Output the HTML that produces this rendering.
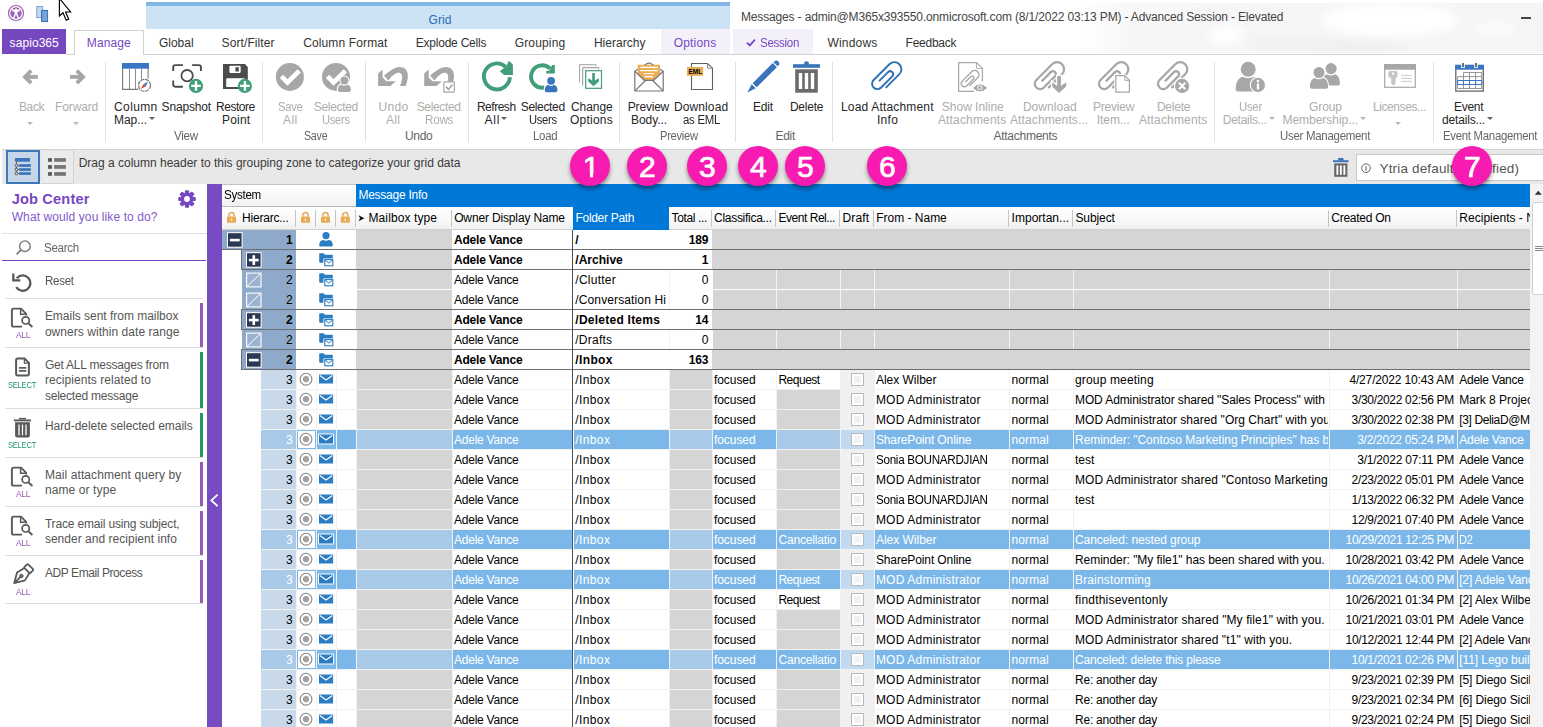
<!DOCTYPE html>
<html lang="en"><head><meta charset="utf-8"><title>Messages - sapio365</title><style>
html,body{margin:0;padding:0;}
body{width:1543px;height:727px;overflow:hidden;position:relative;background:#fff;font-family:"Liberation Sans",sans-serif;font-size:12px;}
div,svg{position:absolute;}
.t{white-space:pre;}
</style></head>
<body>
<div style="left:0px;top:0px;width:1543px;height:55px;background:#fff;"></div>
<svg style="left:1080px;top:0px;" width="463" height="54" viewBox="0 0 463 54"><defs><filter id="wb" x="-20%" y="-50%" width="140%" height="200%"><feGaussianBlur stdDeviation="5"/></filter><linearGradient id="wg" x1="0" x2="1"><stop offset="0" stop-color="#f6f6f6" stop-opacity="0"/><stop offset="0.12" stop-color="#f6f6f6"/><stop offset="1" stop-color="#f5f5f5"/></linearGradient></defs><rect x="0" y="3" width="463" height="50" fill="url(#wg)"/><g filter="url(#wb)"><ellipse cx="310" cy="20" rx="68" ry="17" fill="#fff"/><ellipse cx="147" cy="35" rx="18" ry="9" fill="#fff"/><ellipse cx="80" cy="14" rx="40" ry="6" fill="#fbfbfb"/><ellipse cx="270" cy="46" rx="60" ry="5" fill="#eeeeee"/><ellipse cx="200" cy="42" rx="40" ry="5" fill="#f0f0f0"/><ellipse cx="415" cy="30" rx="22" ry="10" fill="#fafafa"/></g></svg>
<div style="left:146px;top:2px;width:584px;height:27px;background:#cce3f6;"></div>
<div style="left:146px;top:2px;width:584px;height:4px;background:#82b7e5;"></div>
<div class="t" style="top:12px;height:16px;line-height:16px;color:#2a6bb3;letter-spacing:0.109px;left:428.5px;">Grid</div>
<div class="t" style="top:8.5px;height:16px;line-height:16px;color:#444;letter-spacing:-0.157px;left:741px;">Messages - admin@M365x393550.onmicrosoft.com (8/1/2022 03:13 PM) - Advanced Session - Elevated</div>
<div style="left:1521px;top:17px;width:9.5px;height:1.6px;background:#444;"></div>
<svg style="left:7px;top:4px;" width="18" height="18" viewBox="0 0 18 18"><circle cx="9" cy="9" r="7.5" fill="#fff" stroke="#9a5cb6" stroke-width="1.2"/><circle cx="9" cy="9" r="5.7" fill="#9f62b9"/><path d="M9 8.6 L4.6 5.2 M9 8.6 L13.4 5.2 M9 8.2 L6.6 14.6 M9 8.2 L11.4 14.6" stroke="#fff" stroke-width="1.5" fill="none"/><circle cx="9" cy="6.3" r="1.7" fill="#fff"/><path d="M9 11.6 L10.2 13.8 H7.8Z" fill="#9f62b9"/></svg>
<svg style="left:35px;top:5px;" width="15" height="18" viewBox="0 0 15 18"><rect x="1.7" y="1.6" width="6" height="11" fill="#c6d7eb" stroke="#79a5d8" stroke-width="1"/><rect x="6.6" y="5.5" width="6" height="11" fill="#79a4d6" stroke="#2f6eb6" stroke-width="1"/></svg>
<svg style="left:56px;top:0px;" width="18" height="24" viewBox="0 0 18 24"><path d="M3.4 -1.6 L3.4 16 L7 12.8 L10.2 20.3 L12.7 19.2 L9.6 12 L14.6 12 Z" fill="#fff" stroke="#000" stroke-width="1.15" stroke-linejoin="miter"/></svg>
<div style="left:66px;top:54px;width:1477px;height:1px;background:#d2d2d2;"></div>
<div style="left:2px;top:29px;width:64px;height:25.4px;background:#7648c0;"></div>
<div class="t" style="top:34.5px;height:16px;line-height:16px;color:#fff;letter-spacing:0.069px;left:9.6px;">sapio365</div>
<div style="left:74px;top:29.5px;width:70px;height:25.5px;background:#fff;border:1px solid #d2d2d2;border-bottom:none;box-sizing:border-box;"></div>
<div class="t" style="top:35px;height:16px;line-height:16px;color:#7648c0;letter-spacing:0.085px;left:86.8px;">Manage</div>
<div style="left:661px;top:29px;width:69px;height:25px;background:#f4f0fa;"></div>
<div style="left:733px;top:29px;width:80px;height:25px;background:#f4f0fa;"></div>
<div class="t" style="top:35px;height:16px;line-height:16px;color:#333;letter-spacing:0.002px;left:158.9px;">Global</div>
<div class="t" style="top:35px;height:16px;line-height:16px;color:#333;letter-spacing:0.088px;left:221.6px;">Sort/Filter</div>
<div class="t" style="top:35px;height:16px;line-height:16px;color:#333;letter-spacing:0.126px;left:303.2px;">Column Format</div>
<div class="t" style="top:35px;height:16px;line-height:16px;color:#333;letter-spacing:-0.215px;left:415.7px;">Explode Cells</div>
<div class="t" style="top:35px;height:16px;line-height:16px;color:#333;letter-spacing:0.161px;left:514.7px;">Grouping</div>
<div class="t" style="top:35px;height:16px;line-height:16px;color:#333;letter-spacing:0.018px;left:593.9px;">Hierarchy</div>
<div class="t" style="top:35px;height:16px;line-height:16px;color:#7648c0;letter-spacing:0.19px;left:673.7px;">Options</div>
<div class="t" style="top:35px;height:16px;line-height:16px;color:#7648c0;letter-spacing:-0.3px;left:759.7px;transform:scaleX(0.9633);transform-origin:left center;">Session</div>
<div class="t" style="top:35px;height:16px;line-height:16px;color:#333;letter-spacing:0.185px;left:827.5px;">Windows</div>
<div class="t" style="top:35px;height:16px;line-height:16px;color:#333;letter-spacing:-0.258px;left:905.6px;">Feedback</div>
<svg style="left:746px;top:38px;" width="10" height="9" viewBox="0 0 10 9"><path d="M1 4.6 L3.8 7.4 L9 1.6" fill="none" stroke="#7648c0" stroke-width="1.8"/></svg>
<div style="left:105px;top:62px;width:1px;height:80px;background:#e1e1e1;"></div>
<div style="left:262px;top:62px;width:1px;height:80px;background:#e1e1e1;"></div>
<div style="left:365px;top:62px;width:1px;height:80px;background:#e1e1e1;"></div>
<div style="left:468px;top:62px;width:1px;height:80px;background:#e1e1e1;"></div>
<div style="left:619px;top:62px;width:1px;height:80px;background:#e1e1e1;"></div>
<div style="left:735px;top:62px;width:1px;height:80px;background:#e1e1e1;"></div>
<div style="left:832px;top:62px;width:1px;height:80px;background:#e1e1e1;"></div>
<div style="left:1214px;top:62px;width:1px;height:80px;background:#e1e1e1;"></div>
<div style="left:1433px;top:62px;width:1px;height:80px;background:#e1e1e1;"></div>
<div class="t" style="top:98.5px;height:16px;line-height:16px;color:#adadad;letter-spacing:-0.329px;left:18.9px;">Back</div>
<div class="t" style="top:98.5px;height:16px;line-height:16px;color:#adadad;letter-spacing:-0.153px;left:55.1px;">Forward</div>
<div class="t" style="top:98.5px;height:16px;line-height:16px;color:#262626;letter-spacing:0.348px;left:114.1px;">Column</div>
<div class="t" style="top:111.5px;height:16px;line-height:16px;color:#262626;letter-spacing:-0.072px;left:114.1px;">Map...</div>
<div class="t" style="top:98.5px;height:16px;line-height:16px;color:#262626;letter-spacing:-0.174px;left:161.6px;">Snapshot</div>
<div class="t" style="top:98.5px;height:16px;line-height:16px;color:#262626;letter-spacing:-0.455px;left:216px;">Restore</div>
<div class="t" style="top:111.5px;height:16px;line-height:16px;color:#262626;letter-spacing:0.235px;left:221.9px;">Point</div>
<div class="t" style="top:128px;height:16px;line-height:16px;color:#666;letter-spacing:-0.3px;left:173.9px;transform:scaleX(0.968);transform-origin:left center;">View</div>
<div class="t" style="top:98.5px;height:16px;line-height:16px;color:#adadad;letter-spacing:-0.3px;left:277.7px;transform:scaleX(0.9411);transform-origin:left center;">Save</div>
<div class="t" style="top:111.5px;height:16px;line-height:16px;color:#adadad;letter-spacing:0.328px;left:283.1px;">All</div>
<div class="t" style="top:98.5px;height:16px;line-height:16px;color:#adadad;letter-spacing:-0.329px;left:313.8px;">Selected</div>
<div class="t" style="top:111.5px;height:16px;line-height:16px;color:#adadad;letter-spacing:-0.3px;left:322.2px;transform:scaleX(0.9322);transform-origin:left center;">Users</div>
<div class="t" style="top:128px;height:16px;line-height:16px;color:#666;letter-spacing:-0.3px;left:303.8px;transform:scaleX(0.8919);transform-origin:left center;">Save</div>
<div class="t" style="top:98.5px;height:16px;line-height:16px;color:#adadad;letter-spacing:0.337px;left:378.6px;">Undo</div>
<div class="t" style="top:111.5px;height:16px;line-height:16px;color:#adadad;letter-spacing:0.378px;left:385.9px;">All</div>
<div class="t" style="top:98.5px;height:16px;line-height:16px;color:#adadad;letter-spacing:-0.343px;left:416.7px;">Selected</div>
<div class="t" style="top:111.5px;height:16px;line-height:16px;color:#adadad;letter-spacing:-0.3px;left:425px;transform:scaleX(0.9754);transform-origin:left center;">Rows</div>
<div class="t" style="top:128px;height:16px;line-height:16px;color:#666;letter-spacing:-0.296px;left:404.9px;">Undo</div>
<div class="t" style="top:98.5px;height:16px;line-height:16px;color:#262626;letter-spacing:-0.472px;left:476.9px;">Refresh</div>
<div class="t" style="top:111.5px;height:16px;line-height:16px;color:#262626;letter-spacing:0.828px;left:484.5px;">All</div>
<div class="t" style="top:98.5px;height:16px;line-height:16px;color:#262626;letter-spacing:-0.343px;left:520.8px;">Selected</div>
<div class="t" style="top:111.5px;height:16px;line-height:16px;color:#262626;letter-spacing:-0.3px;left:529.1px;transform:scaleX(0.9322);transform-origin:left center;">Users</div>
<div class="t" style="top:98.5px;height:16px;line-height:16px;color:#262626;letter-spacing:-0.049px;left:570.9px;">Change</div>
<div class="t" style="top:111.5px;height:16px;line-height:16px;color:#262626;letter-spacing:0.223px;left:570px;">Options</div>
<div class="t" style="top:128px;height:16px;line-height:16px;color:#666;letter-spacing:-0.3px;left:533px;transform:scaleX(0.9534);transform-origin:left center;">Load</div>
<div class="t" style="top:98.5px;height:16px;line-height:16px;color:#262626;letter-spacing:-0.198px;left:627.8px;">Preview</div>
<div class="t" style="top:111.5px;height:16px;line-height:16px;color:#262626;letter-spacing:-0.061px;left:631px;">Body...</div>
<div class="t" style="top:98.5px;height:16px;line-height:16px;color:#262626;letter-spacing:0.104px;left:674px;">Download</div>
<div class="t" style="top:111.5px;height:16px;line-height:16px;color:#262626;letter-spacing:-0.3px;left:682.9px;transform:scaleX(0.9518);transform-origin:left center;">as EML</div>
<div class="t" style="top:128px;height:16px;line-height:16px;color:#666;letter-spacing:-0.3px;left:660.2px;transform:scaleX(0.9318);transform-origin:left center;">Preview</div>
<div class="t" style="top:98.5px;height:16px;line-height:16px;color:#262626;letter-spacing:-0.129px;left:752.9px;">Edit</div>
<div class="t" style="top:98.5px;height:16px;line-height:16px;color:#262626;letter-spacing:-0.217px;left:789.9px;">Delete</div>
<div class="t" style="top:128px;height:16px;line-height:16px;color:#666;letter-spacing:-0.296px;left:775.5px;">Edit</div>
<div class="t" style="top:98.5px;height:16px;line-height:16px;color:#262626;letter-spacing:0.173px;left:841px;">Load Attachment</div>
<div class="t" style="top:111.5px;height:16px;line-height:16px;color:#262626;letter-spacing:0.328px;left:876.9px;">Info</div>
<div class="t" style="top:98.5px;height:16px;line-height:16px;color:#adadad;letter-spacing:-0.005px;left:941.8px;">Show Inline</div>
<div class="t" style="top:111.5px;height:16px;line-height:16px;color:#adadad;letter-spacing:0.17px;left:937.9px;">Attachments</div>
<div class="t" style="top:98.5px;height:16px;line-height:16px;color:#adadad;letter-spacing:0.061px;left:1022.9px;">Download</div>
<div class="t" style="top:111.5px;height:16px;line-height:16px;color:#adadad;letter-spacing:0.115px;left:1010px;">Attachments...</div>
<div class="t" style="top:98.5px;height:16px;line-height:16px;color:#adadad;letter-spacing:-0.198px;left:1092.9px;">Preview</div>
<div class="t" style="top:111.5px;height:16px;line-height:16px;color:#adadad;letter-spacing:-0.057px;left:1096.8px;">Item...</div>
<div class="t" style="top:98.5px;height:16px;line-height:16px;color:#adadad;letter-spacing:-0.218px;left:1156.9px;">Delete</div>
<div class="t" style="top:111.5px;height:16px;line-height:16px;color:#adadad;letter-spacing:0.17px;left:1138.9px;">Attachments</div>
<div class="t" style="top:128px;height:16px;line-height:16px;color:#666;letter-spacing:-0.27px;left:993.5px;">Attachments</div>
<div class="t" style="top:98.5px;height:16px;line-height:16px;color:#adadad;letter-spacing:-0.3px;left:1239.2px;transform:scaleX(0.9491);transform-origin:left center;">User</div>
<div class="t" style="top:111.5px;height:16px;line-height:16px;color:#adadad;letter-spacing:-0.265px;left:1222.8px;">Details...</div>
<div class="t" style="top:98.5px;height:16px;line-height:16px;color:#adadad;letter-spacing:-0.09px;left:1309px;">Group</div>
<div class="t" style="top:111.5px;height:16px;line-height:16px;color:#adadad;letter-spacing:-0.036px;left:1282.5px;">Membership...</div>
<div class="t" style="top:98.5px;height:16px;line-height:16px;color:#adadad;letter-spacing:-0.417px;left:1373px;">Licenses...</div>
<div class="t" style="top:128px;height:16px;line-height:16px;color:#666;letter-spacing:-0.3px;left:1279.9px;transform:scaleX(0.9564);transform-origin:left center;">User Management</div>
<div class="t" style="top:98.5px;height:16px;line-height:16px;color:#262626;letter-spacing:-0.297px;left:1454px;">Event</div>
<div class="t" style="top:111.5px;height:16px;line-height:16px;color:#262626;letter-spacing:-0.178px;left:1442.1px;">details...</div>
<div class="t" style="top:128px;height:16px;line-height:16px;color:#666;letter-spacing:-0.3px;left:1443.1px;transform:scaleX(0.9492);transform-origin:left center;">Event Management</div>
<svg style="left:26.5px;top:122.0px;" width="6" height="3" viewBox="0 0 6 3"><path d="M0 0 L6 0 L3 3Z" fill="#b8b8b8"/></svg>
<svg style="left:73px;top:122.0px;" width="6" height="3" viewBox="0 0 6 3"><path d="M0 0 L6 0 L3 3Z" fill="#b8b8b8"/></svg>
<svg style="left:148.6px;top:116.9px;" width="6" height="3" viewBox="0 0 6 3"><path d="M0 0 L6 0 L3 3Z" fill="#606060"/></svg>
<svg style="left:500.8px;top:116.9px;" width="6" height="3" viewBox="0 0 6 3"><path d="M0 0 L6 0 L3 3Z" fill="#606060"/></svg>
<svg style="left:1268.7px;top:116.9px;" width="6" height="3" viewBox="0 0 6 3"><path d="M0 0 L6 0 L3 3Z" fill="#b8b8b8"/></svg>
<svg style="left:1359.5px;top:116.9px;" width="6" height="3" viewBox="0 0 6 3"><path d="M0 0 L6 0 L3 3Z" fill="#b8b8b8"/></svg>
<svg style="left:1395.4px;top:122.0px;" width="6" height="3" viewBox="0 0 6 3"><path d="M0 0 L6 0 L3 3Z" fill="#b8b8b8"/></svg>
<svg style="left:1486.7px;top:116.9px;" width="6" height="3" viewBox="0 0 6 3"><path d="M0 0 L6 0 L3 3Z" fill="#606060"/></svg>
<svg style="left:0;top:0" width="1543" height="150" viewBox="0 0 1543 150"><path d="M37.9 76.9 H25.6" fill="none" stroke="#a7a7a7" stroke-width="3.9"/><path d="M31.2 70.7 L25 76.9 L31.2 83.1" fill="none" stroke="#a7a7a7" stroke-width="3.9"/><path d="M70 76.9 H82.4" fill="none" stroke="#a7a7a7" stroke-width="3.9"/><path d="M76.8 70.7 L83 76.9 L76.8 83.1" fill="none" stroke="#a7a7a7" stroke-width="3.9"/><path d="M148.1 68 V78.6 M122.6 68 V89.4 H138.4" fill="none" stroke="#777" stroke-width="1.1"/><rect x="122" y="63" width="27" height="5.7" fill="#3a76c3"/><path d="M129.5 69 V89 M135.5 69 V89 M141.5 69 V79.5" stroke="#8c8c8c" stroke-width="1"/><circle cx="144.5" cy="85.3" r="6" fill="#fff" stroke="#777" stroke-width="1.2" stroke-dasharray="3.9 0.8"/><path d="M148.2 81.6 L145.6 86.4 L143.4 84.2Z" fill="#3a76c3"/><path d="M140.8 89 L145.6 86.4 L143.4 84.2Z" fill="#e0452f"/><path d="M173.2 71 V67.2 Q173.2 65.1 175.3 65.1 H182.9 M192.1 65.1 H198.8 Q200.9 65.1 200.9 67.2 V71 M173.2 80.5 V84.6 Q173.2 86.7 175.3 86.7 H182.9" fill="none" stroke="#4c4c4c" stroke-width="1.9"/><circle cx="187.1" cy="75.7" r="5.7" fill="#fff" stroke="#4c4c4c" stroke-width="1.8"/><circle cx="196" cy="85.9" r="7.1" fill="#419e79"/><path d="M191.2 85.9 H200.8 M196 81.10000000000001 V90.7" stroke="#fff" stroke-width="2.4"/><path d="M223 64 H245.1 L247.8 67.2 V89 H223Z" fill="#4c4c4c"/><rect x="229.4" y="65.7" width="11.3" height="7.3" rx="1.2" fill="#fff"/><rect x="235.4" y="67.2" width="3.4" height="4.3" fill="#4c4c4c"/><rect x="226.2" y="78.3" width="18.9" height="8.8" rx="1.2" fill="#fff"/><circle cx="244.9" cy="85.9" r="7.1" fill="#419e79"/><path d="M240.1 85.9 H249.70000000000002 M244.9 81.10000000000001 V90.7" stroke="#fff" stroke-width="2.4"/><circle cx="289.9" cy="76.9" r="14" fill="#a7a7a7"/><path d="M281.4 76.4 L287.5 82.4 L299.2 70.9" fill="none" stroke="#fff" stroke-width="4.7"/><circle cx="336" cy="76.9" r="14" fill="#a7a7a7"/><path d="M327.5 76.4 L333.6 82.4 L345.3 70.9" fill="none" stroke="#fff" stroke-width="4.7"/><circle cx="344.4" cy="80.5" r="5.0" fill="#fff"/><path d="M337.9 90.0 C337.9 86.8 339.46 84.96 341.358 84.4 C343.22999999999996 86.2 345.57 86.2 347.44199999999995 84.4 C349.34 84.96 350.9 86.8 350.9 90.0 C350.9 91.4 349.7 92.0 348.29999999999995 92.0 L340.5 92.0 C339.09999999999997 92.0 337.9 91.4 337.9 90.0Z" fill="#fff" stroke="#fff" stroke-width="2.2"/><circle cx="344.4" cy="80.5" r="3.9" fill="#a7a7a7"/><path d="M337.9 90.0 C337.9 86.8 339.46 84.96 341.358 84.4 C343.22999999999996 86.2 345.57 86.2 347.44199999999995 84.4 C349.34 84.96 350.9 86.8 350.9 90.0 C350.9 91.4 349.7 92.0 348.29999999999995 92.0 L340.5 92.0 C339.09999999999997 92.0 337.9 91.4 337.9 90.0Z" fill="#a7a7a7"/><g transform="translate(0,0)" fill="#a7a7a7"><path d="M 384 75.8 C 390 69.8, 396 66.9, 399.6 66.9 C 405.2 66.9, 408.1 71, 407.9 76 C 407.7 80, 406.8 83, 405.7 85.9 L 400 85.9 C 401.4 82.5, 402.2 79.5, 402.2 77 C 402.2 74.4, 401 72.7, 398.8 72.7 C 396 72.7, 392 75.2, 388.4 80.4 Z"/><path d="M382.6 69.4 L378.1 73.5 L378.1 85.9 L390.4 85.9 L395.8 81.2 L386.5 81.2 L382.6 77.5Z"/></g><g transform="translate(46.1,0)" fill="#a7a7a7"><path d="M 384 75.8 C 390 69.8, 396 66.9, 399.6 66.9 C 405.2 66.9, 408.1 71, 407.9 76 C 407.7 80, 406.8 83, 405.7 85.9 L 400 85.9 C 401.4 82.5, 402.2 79.5, 402.2 77 C 402.2 74.4, 401 72.7, 398.8 72.7 C 396 72.7, 392 75.2, 388.4 80.4 Z"/><path d="M382.6 69.4 L378.1 73.5 L378.1 85.9 L390.4 85.9 L395.8 81.2 L386.5 81.2 L382.6 77.5Z"/></g><rect x="443.8" y="81.8" width="10.6" height="10.4" rx="0.8" fill="#fff" stroke="#a7a7a7" stroke-width="1.2"/><path d="M446 86.6 L448.4 89.4 L452.6 84.4" fill="none" stroke="#a7a7a7" stroke-width="1.6"/><path d="M509.9 77.2 A13 13 0 1 1 505.6 66.7" fill="none" stroke="#419e79" stroke-width="3.9"/><path d="M509 60.8 L512.9 64.7 V74.9 H504.1 L499.8 71.3 L506 66.5Z" fill="#419e79"/><path d="M544.2 87.5 A11.2 11.2 0 1 1 550.2 68.6" fill="none" stroke="#419e79" stroke-width="3.9"/><path d="M552.1 65 H554.8 V73.5 H546.2 V71 L549.6 70.6Z" fill="#419e79"/><circle cx="551.1" cy="80.8" r="5.0" fill="#fff"/><path d="M544.75 90.3 C544.75 87.1 546.274 85.25999999999999 548.058 84.7 C549.9300000000001 86.5 552.27 86.5 554.142 84.7 C555.926 85.25999999999999 557.45 87.1 557.45 90.3 C557.45 91.7 556.25 92.3 554.85 92.3 L547.35 92.3 C545.95 92.3 544.75 91.7 544.75 90.3Z" fill="#fff" stroke="#fff" stroke-width="2.2"/><circle cx="551.1" cy="80.8" r="3.9" fill="#3a74ba"/><path d="M544.75 90.3 C544.75 87.1 546.274 85.25999999999999 548.058 84.7 C549.9300000000001 86.5 552.27 86.5 554.142 84.7 C555.926 85.25999999999999 557.45 87.1 557.45 90.3 C557.45 91.7 556.25 92.3 554.85 92.3 L547.35 92.3 C545.95 92.3 544.75 91.7 544.75 90.3Z" fill="#3a74ba"/><path d="M579.6 82.7 V64.7 H595.8 V66.4" fill="none" stroke="#a0a0a0" stroke-width="1"/><path d="M582.7 85.6 V67.7 H598.7 V69.4" fill="none" stroke="#909090" stroke-width="1"/><rect x="585.7" y="70.7" width="15.8" height="17.6" fill="#fff" stroke="#419e79" stroke-width="1.2"/><path d="M592.2 73 H594.9 V80.6 L598.9 78.2 V81.4 L593.55 86.2 L588.2 81.4 V78.2 L592.2 80.6Z" fill="#419e79"/><path d="M634.8 71.3 L646 64.2 Q649 62.2 652 64.2 L663.2 71.3 V91 H634.8Z" fill="#fff" stroke="#757575" stroke-width="1.2"/><path d="M637.9 64.7 H660 V73.2 L653.4 80.2 H644.6 L637.9 73.2Z" fill="#e8ae57"/><path d="M640.2 67.4 H657.8 M640.2 70.6 H657.8 M643.5 73.7 H654 M644.6 76.6 H653" stroke="#fff" stroke-width="1.1"/><path d="M634.8 71.3 L644.5 80.3 H653.6 L663.2 71.3 M635.2 90.6 L645.4 80.5 M662.8 90.6 L652.8 80.5" fill="none" stroke="#757575" stroke-width="1.2"/><path d="M691.5 63.5 H707.5 L712.5 68.2 V89.5 H691.5Z" fill="#fff" stroke="#606060" stroke-width="1.1"/><path d="M707.5 63.5 V68.2 H712.5" fill="none" stroke="#808080" stroke-width="0.9"/><rect x="687" y="67" width="16.2" height="8.8" fill="#e8ae57"/><g transform="translate(762.6,77.3) rotate(45)" fill="#3a74ba"><rect x="-2.9" y="-17.2" width="5.8" height="28.4"/><path d="M-2.9 -18.4 V-19.4 A2.9 2.9 0 0 1 2.9 -19.4 V-18.4Z"/><path d="M-2.9 12.6 H2.9 L0 21.6Z"/></g><rect x="793" y="64.2" width="27" height="3.6" fill="#3a74ba"/><path d="M804 65 V63.4 Q804 61.2 806.5 61.2 Q809 61.2 809 63.4 V65Z" fill="#3a74ba"/><rect x="795.2" y="69.3" width="22.6" height="23.4" fill="#6b6b6b"/><rect x="798.8" y="73" width="3.4" height="16" fill="#fff"/><rect x="804.8" y="73" width="3.4" height="16" fill="#fff"/><rect x="810.8" y="73" width="3.4" height="16" fill="#fff"/><g transform="translate(879.2,74.4) rotate(45) scale(1.0)"><path d="M 14.1 4.2 L 14.1 -14.4 A 7.05 7.05 0 0 0 0 -14.4 L 0 7.9 A 5.325 5.325 0 0 0 10.65 7.9 L 10.65 -7.84 A 2.975 2.975 0 0 0 4.7 -7.84 L 4.7 4.2" fill="none" stroke="#2f6fb8" stroke-width="1.9" stroke-linecap="round"/></g><path d="M958.6 62.6 H976.5 L982.4 68.4 V81.5 M958.6 62.6 V91.4 H974" fill="none" stroke="#a6a6a6" stroke-width="1.2"/><path d="M976.5 62.6 V68.4 H982.4" fill="none" stroke="#b0b0b0"/><g transform="translate(965.6,77.8) rotate(45) scale(0.6)"><path d="M 14.1 4.2 L 14.1 -14.4 A 7.05 7.05 0 0 0 0 -14.4 L 0 7.9 A 5.325 5.325 0 0 0 10.65 7.9 L 10.65 -7.84 A 2.975 2.975 0 0 0 4.7 -7.84 L 4.7 4.2" fill="none" stroke="#a6a6a6" stroke-width="2.2" stroke-linecap="round"/></g><path d="M972.6 88 Q979.8 79.6 987.6 88 Q979.8 96 972.6 88Z" fill="#a6a6a6" stroke="#fff" stroke-width="1"/><ellipse cx="979.8" cy="87.6" rx="3" ry="2.6" fill="#d9d9d9"/><circle cx="979.8" cy="87.6" r="1.2" fill="#a6a6a6"/><g transform="translate(1041.9,74.4) rotate(45) scale(1.0)"><path d="M 14.1 4.2 L 14.1 -14.4 A 7.05 7.05 0 0 0 0 -14.4 L 0 7.9 A 5.325 5.325 0 0 0 10.65 7.9 L 10.65 -7.84 A 2.975 2.975 0 0 0 4.7 -7.84 L 4.7 4.2" fill="none" stroke="#a7a7a7" stroke-width="2.3" stroke-linecap="round"/></g><path d="M1052.2 82.2 L1057.2 86 V75.9 H1060.9 V86 L1066.2 82.2 V86.5 L1059 92.9 L1052.2 86.5Z" fill="#fff" stroke="#fff" stroke-width="2.6"/><path d="M1052.2 82.2 L1057.2 86 V75.9 H1060.9 V86 L1066.2 82.2 V86.5 L1059 92.9 L1052.2 86.5Z" fill="#a7a7a7"/><g transform="translate(1106.1,74.4) rotate(45) scale(1.0)"><path d="M 14.1 4.2 L 14.1 -14.4 A 7.05 7.05 0 0 0 0 -14.4 L 0 7.9 A 5.325 5.325 0 0 0 10.65 7.9 L 10.65 -7.84 A 2.975 2.975 0 0 0 4.7 -7.84 L 4.7 4.2" fill="none" stroke="#a7a7a7" stroke-width="2.3" stroke-linecap="round"/></g><path d="M1115.8 75.7 H1124.8 L1129.4 80.3 V92.2 H1115.8Z" fill="#fff" stroke="#fff" stroke-width="3.2"/><path d="M1115.8 75.7 H1124.8 L1129.4 80.3 V92.2 H1115.8Z" fill="#fff" stroke="#a7a7a7" stroke-width="1.2"/><path d="M1124.8 75.7 V80.3 H1129.4" fill="none" stroke="#a7a7a7"/><g transform="translate(1165.1,74.4) rotate(45) scale(1.0)"><path d="M 14.1 4.2 L 14.1 -14.4 A 7.05 7.05 0 0 0 0 -14.4 L 0 7.9 A 5.325 5.325 0 0 0 10.65 7.9 L 10.65 -7.84 A 2.975 2.975 0 0 0 4.7 -7.84 L 4.7 4.2" fill="none" stroke="#a7a7a7" stroke-width="2.3" stroke-linecap="round"/></g><circle cx="1182.1" cy="85.9" r="8.3" fill="#fff"/><circle cx="1182.1" cy="85.9" r="7.1" fill="#a7a7a7"/><path d="M1178.8 82.6 L1185.4 89.2 M1185.4 82.6 L1178.8 89.2" stroke="#fff" stroke-width="2"/><circle cx="1248.2" cy="69.3" r="7.5" fill="#a7a7a7"/><path d="M1235.7 89.39999999999999 C1235.7 81.64999999999999 1238.7 78.19999999999999 1242.3500000000001 76.8 C1245.95 78.6 1250.45 78.6 1254.05 76.8 C1257.7 78.19999999999999 1260.7 81.64999999999999 1260.7 89.39999999999999 C1260.7 90.8 1259.5 91.39999999999999 1258.1000000000001 91.39999999999999 L1238.3 91.39999999999999 C1236.9 91.39999999999999 1235.7 90.8 1235.7 89.39999999999999Z" fill="#a7a7a7"/><circle cx="1257.9" cy="84.9" r="8.2" fill="#fff"/><circle cx="1257.9" cy="84.9" r="7.1" fill="#a7a7a7"/><rect x="1256.8" y="83.4" width="2.3" height="6" fill="#fff"/><rect x="1256.8" y="79.9" width="2.3" height="2.3" fill="#fff"/><circle cx="1331.1" cy="68.6" r="5.6" fill="#a7a7a7"/><path d="M1322.3 83.39999999999998 C1322.3 77.85999999999999 1324.412 75.19199999999998 1326.732 74.19999999999999 C1329.4199999999998 75.99999999999999 1332.78 75.99999999999999 1335.4679999999998 74.19999999999999 C1337.7879999999998 75.19199999999998 1339.8999999999999 77.85999999999999 1339.8999999999999 83.39999999999998 C1339.8999999999999 84.79999999999998 1338.6999999999998 85.39999999999998 1337.3 85.39999999999998 L1324.8999999999999 85.39999999999998 C1323.5 85.39999999999998 1322.3 84.79999999999998 1322.3 83.39999999999998Z" fill="#a7a7a7"/><circle cx="1319" cy="72.5" r="6.6" fill="#fff"/><path d="M1309.9 86.8 C1309.9 81.52 1312.084 78.94399999999999 1314.71 78.0 C1317.35 79.8 1320.65 79.8 1323.29 78.0 C1325.916 78.94399999999999 1328.1 81.52 1328.1 86.8 C1328.1 88.2 1326.8999999999999 88.8 1325.5 88.8 L1312.5 88.8 C1311.1000000000001 88.8 1309.9 88.2 1309.9 86.8Z" fill="#fff" stroke="#fff" stroke-width="2.2"/><circle cx="1319" cy="72.5" r="5.5" fill="#a7a7a7"/><path d="M1309.9 86.8 C1309.9 81.52 1312.084 78.94399999999999 1314.71 78.0 C1317.35 79.8 1320.65 79.8 1323.29 78.0 C1325.916 78.94399999999999 1328.1 81.52 1328.1 86.8 C1328.1 88.2 1326.8999999999999 88.8 1325.5 88.8 L1312.5 88.8 C1311.1000000000001 88.8 1309.9 88.2 1309.9 86.8Z" fill="#a7a7a7"/><rect x="1384.7" y="64.6" width="30.6" height="22.7" fill="#fff" stroke="#a7a7a7" stroke-width="1.2"/><rect x="1384.1" y="64" width="31.8" height="5.7" fill="#a7a7a7"/><path d="M1388.2 73 Q1388.2 71 1390.2 71 H1395.6 Q1397.6 71 1397.6 73 V75.4 Q1397.6 77.6 1395.6 77.8 V83.4 L1393.4 85.8 L1391.2 83.4 V77.8 Q1388.2 77.6 1388.2 75.4Z" fill="#c6c6c6"/><rect x="1392" y="72.6" width="2" height="2" fill="#fff"/><path d="M1401.1 75.4 H1411.8 M1401.1 78.4 H1411.8 M1401.1 81.4 H1411.8" stroke="#c4c4c4" stroke-width="0.9"/><rect x="1455.8" y="66" width="27.5" height="25.1" fill="#fff" stroke="#686868" stroke-width="1.3"/><rect x="1455.2" y="64.7" width="28.7" height="5" fill="#3a76c3"/><rect x="1461.2" y="62.4" width="3.6" height="5.6" fill="#fff"/><rect x="1474.2" y="62.4" width="3.6" height="5.6" fill="#fff"/><rect x="1462.1" y="63" width="1.9" height="4.2" fill="#666"/><rect x="1475.1" y="63" width="1.9" height="4.2" fill="#666"/><path d="M1463.5 72.5 H1481.7 V88.5 H1457.6 V76.6 H1481.7 M1457.6 84.5 H1481.7 M1463.5 72.5 V88.5 M1469.5 72.5 V88.5 M1475.6 72.5 V88.5" fill="none" stroke="#8a8a8a" stroke-width="0.9" stroke-linejoin="round"/><path d="M1457.6 80.5 H1481.7 V84.5 H1457.6Z M1463.5 80.5 V84.5 M1469.5 80.5 V84.5 M1475.6 80.5 V84.5" fill="none" stroke="#3a76c3" stroke-width="1"/></svg>
<div class="t" style="top:64px;height:16px;line-height:16px;font-size:6.6px;font-weight:700;letter-spacing:-0.061px;left:688.4px;">EML</div>
<div style="left:2px;top:149px;width:1541px;height:35px;background:#e8e8e8;"></div>
<div style="left:2px;top:149px;width:1541px;height:1px;background:#d3d3d3;"></div>
<div style="left:6px;top:150px;width:34px;height:33.5px;background:#c6d6e8;border:2px solid #3d77b8;box-sizing:border-box;"></div>
<div style="left:41px;top:150px;width:33px;height:33.5px;background:#ebebeb;border:1px solid #d2d2d2;border-left-color:#e4e4e4;border-top-color:#e2e2e2;box-sizing:border-box;"></div>
<svg style="left:0;top:0" width="1543" height="190" viewBox="0 0 1543 190"><rect x="15" y="158" width="15" height="3.7" fill="#3b74b8"/><path d="M16.4 161.5 V174" stroke="#4a4a4a" stroke-width="0.9"/><rect x="19.2" y="164.2" width="11.6" height="2.7" fill="#3b74b8"/><path d="M17.6 165.54999999999998 H19.4" stroke="#4a4a4a" stroke-width="0.9"/><circle cx="16.4" cy="165.54999999999998" r="1.35" fill="#dfe8f2" stroke="#4a4a4a" stroke-width="0.9"/><rect x="19.2" y="168.2" width="11.6" height="2.7" fill="#3b74b8"/><path d="M17.6 169.54999999999998 H19.4" stroke="#4a4a4a" stroke-width="0.9"/><circle cx="16.4" cy="169.54999999999998" r="1.35" fill="#dfe8f2" stroke="#4a4a4a" stroke-width="0.9"/><rect x="19.2" y="172.2" width="11.6" height="2.7" fill="#3b74b8"/><path d="M17.6 173.54999999999998 H19.4" stroke="#4a4a4a" stroke-width="0.9"/><circle cx="16.4" cy="173.54999999999998" r="1.35" fill="#dfe8f2" stroke="#4a4a4a" stroke-width="0.9"/><rect x="48.1" y="158.1" width="3.8" height="3.7" fill="#555"/><rect x="54.1" y="158.1" width="11.8" height="3.7" fill="#767676"/><rect x="48.1" y="165.1" width="3.8" height="3.7" fill="#555"/><rect x="54.1" y="165.1" width="11.8" height="3.7" fill="#767676"/><rect x="48.1" y="172.1" width="3.8" height="3.7" fill="#555"/><rect x="54.1" y="172.1" width="11.8" height="3.7" fill="#767676"/><rect x="1333" y="160.2" width="15.6" height="2" fill="#3b74b8"/><rect x="1338" y="158" width="5.6" height="2.6" rx="0.8" fill="#3b74b8"/><rect x="1334.2" y="163.4" width="13.2" height="13.4" fill="#666"/><rect x="1336.4" y="165.4" width="1.9" height="9.4" fill="#fff"/><rect x="1339.9" y="165.4" width="1.9" height="9.4" fill="#fff"/><rect x="1343.4" y="165.4" width="1.9" height="9.4" fill="#fff"/></svg>
<div class="t" style="top:155px;height:16px;line-height:16px;color:#3a3a3a;letter-spacing:-0.006px;left:78.7px;">Drag a column header to this grouping zone to categorize your grid data</div>
<div style="left:1356px;top:154px;width:190px;height:27px;background:#fff;border:1px solid #c8c8c8;box-sizing:border-box;"></div>
<svg style="left:1360px;top:162px;" width="12" height="12" viewBox="0 0 12 12"><circle cx="6" cy="6.2" r="4.3" fill="none" stroke="#555" stroke-width="0.9"/><path d="M6 4 V8.6" stroke="#555" stroke-width="1"/></svg>
<div class="t" style="top:159px;height:19px;line-height:19px;font-size:13.5px;color:#555;letter-spacing:0.16px;left:1379.5px;">Ytria default (modified)</div>
<div style="left:0px;top:184px;width:207px;height:543px;background:#fff;"></div>
<div class="t" style="top:188.5px;height:20px;line-height:20px;font-size:14.6px;color:#7648c0;font-weight:700;letter-spacing:0.163px;left:11.7px;">Job Center</div>
<div class="t" style="top:208.5px;height:16px;line-height:16px;color:#8259c8;letter-spacing:0.095px;left:11.7px;">What would you like to do?</div>
<div style="left:2px;top:233px;width:205px;height:1px;background:#e0e0e0;"></div>
<div class="t" style="top:239.5px;height:16px;line-height:16px;color:#666;letter-spacing:-0.3px;left:44.4px;transform:scaleX(0.9663);transform-origin:left center;">Search</div>
<div style="left:2px;top:260px;width:204px;height:1.4px;background:#7648c0;"></div>
<div style="left:5px;top:298px;width:198px;height:1px;background:#dedede;"></div>
<div style="left:5px;top:347px;width:198px;height:1px;background:#dedede;"></div>
<div style="left:5px;top:408px;width:198px;height:1px;background:#dedede;"></div>
<div style="left:5px;top:457px;width:198px;height:1px;background:#dedede;"></div>
<div style="left:5px;top:506px;width:198px;height:1px;background:#dedede;"></div>
<div style="left:5px;top:555px;width:198px;height:1px;background:#dedede;"></div>
<div style="left:5px;top:603px;width:198px;height:1px;background:#dedede;"></div>
<div class="t" style="top:272.5px;height:16px;line-height:16px;color:#555;letter-spacing:-0.3px;left:45px;transform:scaleX(0.9616);transform-origin:left center;">Reset</div>
<div style="left:200px;top:303px;width:3px;height:44px;background:#9a58b2;"></div>
<div class="t" style="top:308px;height:16px;line-height:16px;color:#555;letter-spacing:-0.024px;left:44.9px;">Emails sent from mailbox</div>
<div class="t" style="top:323.5px;height:16px;line-height:16px;color:#555;letter-spacing:0.047px;left:44.9px;">owners within date range</div>
<div style="left:200px;top:352px;width:3px;height:56px;background:#22986a;"></div>
<div class="t" style="top:356.5px;height:16px;line-height:16px;color:#555;letter-spacing:-0.209px;left:44.9px;">Get ALL messages from</div>
<div class="t" style="top:372px;height:16px;line-height:16px;color:#555;letter-spacing:0.063px;left:44.9px;">recipients related to</div>
<div class="t" style="top:387.5px;height:16px;line-height:16px;color:#555;letter-spacing:-0.209px;left:44.9px;">selected message</div>
<div style="left:200px;top:413px;width:3px;height:44px;background:#22986a;"></div>
<div class="t" style="top:417.5px;height:16px;line-height:16px;color:#555;letter-spacing:-0.037px;left:44.9px;">Hard-delete selected emails</div>
<div style="left:200px;top:462px;width:3px;height:44px;background:#9a58b2;"></div>
<div class="t" style="top:466.5px;height:16px;line-height:16px;color:#555;letter-spacing:0.097px;left:44.9px;">Mail attachment query by</div>
<div class="t" style="top:482px;height:16px;line-height:16px;color:#555;letter-spacing:0.105px;left:44.9px;">name or type</div>
<div style="left:200px;top:511px;width:3px;height:44px;background:#9a58b2;"></div>
<div class="t" style="top:515.5px;height:16px;line-height:16px;color:#555;letter-spacing:-0.166px;left:44.9px;">Trace email using subject,</div>
<div class="t" style="top:530.5px;height:16px;line-height:16px;color:#555;letter-spacing:0.024px;left:44.9px;">sender and recipient info</div>
<div style="left:200px;top:560px;width:3px;height:43px;background:#9a58b2;"></div>
<div class="t" style="top:564.5px;height:16px;line-height:16px;color:#555;letter-spacing:-0.412px;left:44.9px;">ADP Email Process</div>
<div class="t" style="top:327px;height:16px;line-height:16px;font-size:9.6px;color:#9a58b2;letter-spacing:-0.3px;left:2.55px;width:40px;text-align:center;transform:scaleX(0.8739);transform-origin:center center;">ALL</div>
<div class="t" style="top:376.5px;height:16px;line-height:16px;font-size:9.6px;color:#22986a;letter-spacing:-0.3px;left:-7.55px;width:60px;text-align:center;transform:scaleX(0.7899);transform-origin:center center;">SELECT</div>
<div class="t" style="top:437px;height:16px;line-height:16px;font-size:9.6px;color:#22986a;letter-spacing:-0.3px;left:-7.55px;width:60px;text-align:center;transform:scaleX(0.7899);transform-origin:center center;">SELECT</div>
<div class="t" style="top:486px;height:16px;line-height:16px;font-size:9.6px;color:#9a58b2;letter-spacing:-0.3px;left:2.55px;width:40px;text-align:center;transform:scaleX(0.8739);transform-origin:center center;">ALL</div>
<div class="t" style="top:535px;height:16px;line-height:16px;font-size:9.6px;color:#9a58b2;letter-spacing:-0.3px;left:2.55px;width:40px;text-align:center;transform:scaleX(0.8739);transform-origin:center center;">ALL</div>
<div class="t" style="top:584px;height:16px;line-height:16px;font-size:9.6px;color:#9a58b2;letter-spacing:-0.3px;left:2.55px;width:40px;text-align:center;transform:scaleX(0.8739);transform-origin:center center;">ALL</div>
<svg style="left:0;top:0;z-index:3" width="230" height="727" viewBox="0 0 230 727"><g transform="translate(187,199)" fill="#7648c0"><rect x="-2.1" y="-8.8" width="4.2" height="5" rx="1" transform="rotate(0)"/><rect x="-2.1" y="-8.8" width="4.2" height="5" rx="1" transform="rotate(45)"/><rect x="-2.1" y="-8.8" width="4.2" height="5" rx="1" transform="rotate(90)"/><rect x="-2.1" y="-8.8" width="4.2" height="5" rx="1" transform="rotate(135)"/><rect x="-2.1" y="-8.8" width="4.2" height="5" rx="1" transform="rotate(180)"/><rect x="-2.1" y="-8.8" width="4.2" height="5" rx="1" transform="rotate(225)"/><rect x="-2.1" y="-8.8" width="4.2" height="5" rx="1" transform="rotate(270)"/><rect x="-2.1" y="-8.8" width="4.2" height="5" rx="1" transform="rotate(315)"/><circle r="6.5"/><circle r="2.9" fill="#fff"/></g><circle cx="24.9" cy="246.2" r="5.3" fill="none" stroke="#787878" stroke-width="1.4"/><path d="M20.8 250 L16.7 254.3" stroke="#787878" stroke-width="1.7"/><path d="M16.72 278.25 A7.7 7.7 0 1 1 16.17 287.18" fill="none" stroke="#595959" stroke-width="2.3"/><path d="M13.3 273.4 V280.3 H20.4" fill="none" stroke="#595959" stroke-width="2.3"/><path d="M22 326.6 H13.6 Q11.9 326.6 11.9 324.9 V310.3 Q11.9 308.6 13.6 308.6 H21 L26.2 313.8 V315.6" fill="none" stroke="#595959" stroke-width="1.9"/><path d="M20.6 309 V314.2 H25.8" fill="none" stroke="#595959" stroke-width="1.5"/><circle cx="25.7" cy="320.4" r="3.6" fill="#fff" stroke="#595959" stroke-width="1.7"/><path d="M28.4 323.2 L32.4 327" stroke="#595959" stroke-width="1.9"/><path d="M22 485.6 H13.6 Q11.9 485.6 11.9 483.9 V469.3 Q11.9 467.6 13.6 467.6 H21 L26.2 472.8 V474.6" fill="none" stroke="#595959" stroke-width="1.9"/><path d="M20.6 468 V473.2 H25.8" fill="none" stroke="#595959" stroke-width="1.5"/><circle cx="25.7" cy="479.4" r="3.6" fill="#fff" stroke="#595959" stroke-width="1.7"/><path d="M28.4 482.2 L32.4 486" stroke="#595959" stroke-width="1.9"/><path d="M22 534.6 H13.6 Q11.9 534.6 11.9 532.9 V518.3 Q11.9 516.6 13.6 516.6 H21 L26.2 521.8 V523.6" fill="none" stroke="#595959" stroke-width="1.9"/><path d="M20.6 517 V522.2 H25.8" fill="none" stroke="#595959" stroke-width="1.5"/><circle cx="25.7" cy="528.4" r="3.6" fill="#fff" stroke="#595959" stroke-width="1.7"/><path d="M28.4 531.2 L32.4 535" stroke="#595959" stroke-width="1.9"/><path d="M17.6 358.6 H24.6 L28.9 362.9 V373.8 Q28.9 375.4 27.3 375.4 H17.6 Q16.1 375.4 16.1 373.8 V360.2 Q16.1 358.6 17.6 358.6Z" fill="none" stroke="#595959" stroke-width="2"/><path d="M24.4 359 V363.2 H28.6" fill="none" stroke="#595959" stroke-width="1.3"/><path d="M19 367.8 H26.3 M19 370.9 H26.3" stroke="#595959" stroke-width="1.8"/><path d="M13.9 420.4 H31" stroke="#595959" stroke-width="1.9"/><path d="M18.9 418.6 H26" stroke="#595959" stroke-width="1.5"/><path d="M15.1 422.3 H29.9 V435.6 Q29.9 437.6 27.9 437.6 H17.1 Q15.1 437.6 15.1 435.6Z" fill="#595959"/><path d="M19 424.6 V435.2 M22.5 424.6 V435.2 M26 424.6 V435.2" stroke="#fff" stroke-width="1.3"/><g transform="translate(22.4,575) rotate(45)" fill="none" stroke="#595959" stroke-width="1.8" stroke-linejoin="round"><rect x="-4.2" y="-11.6" width="8.4" height="5.2" rx="0.8"/><path d="M-3.6 -6.4 L-5.6 2 L0 11.6 L5.6 2 L3.6 -6.4"/><path d="M0 11 V2.8"/><circle cx="0" cy="1.4" r="1.3"/></g><path d="M217.6 494.6 L211.4 500.4 L217.6 506.2" fill="none" stroke="#fff" stroke-width="1.8"/></svg>
<div style="left:222px;top:184px;width:1308px;height:543px;background:#fff;"></div>
<div style="left:222px;top:184px;width:134px;height:23px;background:linear-gradient(#fff,#f1f1f1);"></div>
<div style="left:356px;top:184px;width:1174px;height:23px;background:#0078d7;"></div>
<div style="left:222px;top:206px;width:134px;height:1px;background:#b9b9b9;"></div>
<div style="left:222px;top:184px;width:134px;height:1px;background:#c4c4c4;"></div>
<div class="t" style="top:186.5px;height:16px;line-height:16px;letter-spacing:-0.3px;left:224.4px;transform:scaleX(0.9658);transform-origin:left center;">System</div>
<div class="t" style="top:186.5px;height:16px;line-height:16px;color:#fff;letter-spacing:-0.241px;left:358.4px;">Message Info</div>
<div style="left:222px;top:207px;width:1308px;height:23px;background:linear-gradient(#fff 0%,#fafafa 50%,#efefef 100%);"></div>
<div style="left:222px;top:229px;width:1308px;height:1px;background:#d0d0d0;"></div>
<div style="left:572.5px;top:207px;width:96.5px;height:23px;background:#0078d7;"></div>
<div style="left:295px;top:210px;width:1px;height:17px;background:#c4c4c4;"></div>
<div style="left:315px;top:210px;width:1px;height:17px;background:#c4c4c4;"></div>
<div style="left:335px;top:210px;width:1px;height:17px;background:#c4c4c4;"></div>
<div style="left:355px;top:210px;width:1px;height:17px;background:#c4c4c4;"></div>
<div style="left:451px;top:210px;width:1px;height:17px;background:#c4c4c4;"></div>
<div style="left:711px;top:210px;width:1px;height:17px;background:#c4c4c4;"></div>
<div style="left:775px;top:210px;width:1px;height:17px;background:#c4c4c4;"></div>
<div style="left:839px;top:210px;width:1px;height:17px;background:#c4c4c4;"></div>
<div style="left:873px;top:210px;width:1px;height:17px;background:#c4c4c4;"></div>
<div style="left:1008px;top:210px;width:1px;height:17px;background:#c4c4c4;"></div>
<div style="left:1072px;top:210px;width:1px;height:17px;background:#c4c4c4;"></div>
<div style="left:1328px;top:210px;width:1px;height:17px;background:#c4c4c4;"></div>
<div style="left:1456px;top:210px;width:1px;height:17px;background:#c4c4c4;"></div>
<div class="t" style="top:209.5px;height:16px;line-height:16px;letter-spacing:-0.221px;left:242.1px;">Hierarc...</div>
<div class="t" style="top:209.5px;height:16px;line-height:16px;letter-spacing:0.102px;left:368.5px;">Mailbox type</div>
<div class="t" style="top:209.5px;height:16px;line-height:16px;letter-spacing:-0.151px;left:454.2px;">Owner Display Name</div>
<div class="t" style="top:209.5px;height:16px;line-height:16px;color:#fff;letter-spacing:-0.305px;left:575.5px;">Folder Path</div>
<div class="t" style="top:209.5px;height:16px;line-height:16px;letter-spacing:-0.373px;left:671.6px;">Total ...</div>
<div class="t" style="top:209.5px;height:16px;line-height:16px;letter-spacing:-0.28px;left:714px;">Classifica...</div>
<div class="t" style="top:209.5px;height:16px;line-height:16px;letter-spacing:-0.457px;left:778.4px;">Event Rel...</div>
<div class="t" style="top:209.5px;height:16px;line-height:16px;letter-spacing:0.121px;left:842.5px;">Draft</div>
<div class="t" style="top:209.5px;height:16px;line-height:16px;letter-spacing:-0.017px;left:876.3px;">From - Name</div>
<div class="t" style="top:209.5px;height:16px;line-height:16px;letter-spacing:0.014px;left:1011.6px;">Importan...</div>
<div class="t" style="top:209.5px;height:16px;line-height:16px;letter-spacing:-0.089px;left:1075.4px;">Subject</div>
<div class="t" style="top:209.5px;height:16px;line-height:16px;letter-spacing:-0.272px;left:1331.3px;">Created On</div>
<div class="t" style="top:209.5px;height:16px;line-height:16px;letter-spacing:0.019px;left:1459.3px;width:70.7px;overflow:hidden;">Recipients - N</div>
<div style="left:222px;top:230px;width:74px;height:20px;background:#8ea9c9;"></div>
<div class="t" style="top:231.5px;height:16px;line-height:16px;font-weight:700;left:262.8px;width:30px;text-align:right;">1</div>
<div style="left:356px;top:230px;width:96px;height:20px;background:#d5d5d5;"></div>
<div style="left:712px;top:230px;width:818px;height:20px;background:#d5d5d5;"></div>
<div class="t" style="top:231.5px;height:16px;line-height:16px;font-weight:700;letter-spacing:-0.212px;left:454px;">Adele Vance</div>
<div class="t" style="top:231.5px;height:16px;line-height:16px;font-weight:700;left:575.3px;width:91px;overflow:hidden;">/</div>
<div class="t" style="top:231.5px;height:16px;line-height:16px;font-weight:700;letter-spacing:-0.25px;left:668.15px;width:40px;text-align:right;">189</div>
<div style="left:242px;top:250px;width:54px;height:20px;background:#8ea9c9;"></div>
<div class="t" style="top:251.5px;height:16px;line-height:16px;font-weight:700;left:262.8px;width:30px;text-align:right;">2</div>
<div style="left:356px;top:250px;width:96px;height:20px;background:#d5d5d5;"></div>
<div style="left:712px;top:250px;width:818px;height:20px;background:#d5d5d5;"></div>
<div class="t" style="top:251.5px;height:16px;line-height:16px;font-weight:700;letter-spacing:-0.212px;left:454px;">Adele Vance</div>
<div class="t" style="top:251.5px;height:16px;line-height:16px;font-weight:700;letter-spacing:0.02px;left:575.3px;width:91px;overflow:hidden;">/Archive</div>
<div class="t" style="top:251.5px;height:16px;line-height:16px;font-weight:700;letter-spacing:-0.25px;left:668.15px;width:40px;text-align:right;">1</div>
<div style="left:242px;top:270px;width:54px;height:20px;background:#8ea9c9;"></div>
<div class="t" style="top:271.5px;height:16px;line-height:16px;left:262.8px;width:30px;text-align:right;">2</div>
<div style="left:357px;top:270px;width:95px;height:19px;background:#d5d5d5;"></div>
<div style="left:713px;top:270px;width:63px;height:19px;background:#d5d5d5;"></div>
<div style="left:777px;top:270px;width:63px;height:19px;background:#d5d5d5;"></div>
<div style="left:841px;top:270px;width:33px;height:19px;background:#d5d5d5;"></div>
<div style="left:875px;top:270px;width:134px;height:19px;background:#d5d5d5;"></div>
<div style="left:1010px;top:270px;width:63px;height:19px;background:#d5d5d5;"></div>
<div style="left:1074px;top:270px;width:255px;height:19px;background:#d5d5d5;"></div>
<div style="left:1330px;top:270px;width:127px;height:19px;background:#d5d5d5;"></div>
<div style="left:1458px;top:270px;width:72px;height:19px;background:#d5d5d5;"></div>
<div style="left:669px;top:270px;width:1px;height:20px;background:#f1f1f1;"></div>
<div class="t" style="top:271.5px;height:16px;line-height:16px;letter-spacing:-0.237px;left:454px;">Adele Vance</div>
<div class="t" style="top:271.5px;height:16px;line-height:16px;letter-spacing:0.259px;left:575.3px;width:91px;overflow:hidden;">/Clutter</div>
<div class="t" style="top:271.5px;height:16px;line-height:16px;letter-spacing:-0.25px;left:668.15px;width:40px;text-align:right;">0</div>
<div style="left:242px;top:290px;width:54px;height:20px;background:#8ea9c9;"></div>
<div class="t" style="top:291.5px;height:16px;line-height:16px;left:262.8px;width:30px;text-align:right;">2</div>
<div style="left:357px;top:290px;width:95px;height:19px;background:#d5d5d5;"></div>
<div style="left:713px;top:290px;width:63px;height:19px;background:#d5d5d5;"></div>
<div style="left:777px;top:290px;width:63px;height:19px;background:#d5d5d5;"></div>
<div style="left:841px;top:290px;width:33px;height:19px;background:#d5d5d5;"></div>
<div style="left:875px;top:290px;width:134px;height:19px;background:#d5d5d5;"></div>
<div style="left:1010px;top:290px;width:63px;height:19px;background:#d5d5d5;"></div>
<div style="left:1074px;top:290px;width:255px;height:19px;background:#d5d5d5;"></div>
<div style="left:1330px;top:290px;width:127px;height:19px;background:#d5d5d5;"></div>
<div style="left:1458px;top:290px;width:72px;height:19px;background:#d5d5d5;"></div>
<div style="left:669px;top:290px;width:1px;height:20px;background:#f1f1f1;"></div>
<div class="t" style="top:291.5px;height:16px;line-height:16px;letter-spacing:-0.237px;left:454px;">Adele Vance</div>
<div class="t" style="top:291.5px;height:16px;line-height:16px;letter-spacing:0.125px;left:575.3px;width:91px;overflow:hidden;">/Conversation Hi</div>
<div class="t" style="top:291.5px;height:16px;line-height:16px;letter-spacing:-0.25px;left:668.15px;width:40px;text-align:right;">0</div>
<div style="left:242px;top:310px;width:54px;height:20px;background:#8ea9c9;"></div>
<div class="t" style="top:311.5px;height:16px;line-height:16px;font-weight:700;left:262.8px;width:30px;text-align:right;">2</div>
<div style="left:356px;top:310px;width:96px;height:20px;background:#d5d5d5;"></div>
<div style="left:712px;top:310px;width:818px;height:20px;background:#d5d5d5;"></div>
<div class="t" style="top:311.5px;height:16px;line-height:16px;font-weight:700;letter-spacing:-0.212px;left:454px;">Adele Vance</div>
<div class="t" style="top:311.5px;height:16px;line-height:16px;font-weight:700;letter-spacing:0.248px;left:575.3px;width:91px;overflow:hidden;">/Deleted Items</div>
<div class="t" style="top:311.5px;height:16px;line-height:16px;font-weight:700;letter-spacing:-0.25px;left:668.15px;width:40px;text-align:right;">14</div>
<div style="left:242px;top:330px;width:54px;height:20px;background:#8ea9c9;"></div>
<div class="t" style="top:331.5px;height:16px;line-height:16px;left:262.8px;width:30px;text-align:right;">2</div>
<div style="left:357px;top:330px;width:95px;height:19px;background:#d5d5d5;"></div>
<div style="left:713px;top:330px;width:63px;height:19px;background:#d5d5d5;"></div>
<div style="left:777px;top:330px;width:63px;height:19px;background:#d5d5d5;"></div>
<div style="left:841px;top:330px;width:33px;height:19px;background:#d5d5d5;"></div>
<div style="left:875px;top:330px;width:134px;height:19px;background:#d5d5d5;"></div>
<div style="left:1010px;top:330px;width:63px;height:19px;background:#d5d5d5;"></div>
<div style="left:1074px;top:330px;width:255px;height:19px;background:#d5d5d5;"></div>
<div style="left:1330px;top:330px;width:127px;height:19px;background:#d5d5d5;"></div>
<div style="left:1458px;top:330px;width:72px;height:19px;background:#d5d5d5;"></div>
<div style="left:669px;top:330px;width:1px;height:20px;background:#f1f1f1;"></div>
<div class="t" style="top:331.5px;height:16px;line-height:16px;letter-spacing:-0.237px;left:454px;">Adele Vance</div>
<div class="t" style="top:331.5px;height:16px;line-height:16px;letter-spacing:0.243px;left:575.3px;width:91px;overflow:hidden;">/Drafts</div>
<div class="t" style="top:331.5px;height:16px;line-height:16px;letter-spacing:-0.25px;left:668.15px;width:40px;text-align:right;">0</div>
<div style="left:242px;top:350px;width:54px;height:20px;background:#8ea9c9;"></div>
<div class="t" style="top:351.5px;height:16px;line-height:16px;font-weight:700;left:262.8px;width:30px;text-align:right;">2</div>
<div style="left:356px;top:350px;width:96px;height:20px;background:#d5d5d5;"></div>
<div style="left:712px;top:350px;width:818px;height:20px;background:#d5d5d5;"></div>
<div class="t" style="top:351.5px;height:16px;line-height:16px;font-weight:700;letter-spacing:-0.212px;left:454px;">Adele Vance</div>
<div class="t" style="top:351.5px;height:16px;line-height:16px;font-weight:700;letter-spacing:0.371px;left:575.3px;width:91px;overflow:hidden;">/Inbox</div>
<div class="t" style="top:351.5px;height:16px;line-height:16px;font-weight:700;letter-spacing:-0.25px;left:668.15px;width:40px;text-align:right;">163</div>
<div style="left:221px;top:249px;width:1309px;height:1px;background:#6e6e6e;"></div>
<div style="left:221px;top:230px;width:1px;height:20px;background:#6e6e6e;"></div>
<div style="left:241px;top:249px;width:1289px;height:1px;background:#6e6e6e;"></div>
<div style="left:241px;top:269px;width:1289px;height:1px;background:#6e6e6e;"></div>
<div style="left:241px;top:249px;width:1px;height:21px;background:#6e6e6e;"></div>
<div style="left:241px;top:309px;width:1289px;height:1px;background:#6e6e6e;"></div>
<div style="left:241px;top:329px;width:1289px;height:1px;background:#6e6e6e;"></div>
<div style="left:241px;top:309px;width:1px;height:21px;background:#6e6e6e;"></div>
<div style="left:241px;top:349px;width:1289px;height:1px;background:#6e6e6e;"></div>
<div style="left:241px;top:369px;width:1289px;height:1px;background:#6e6e6e;"></div>
<div style="left:241px;top:349px;width:1px;height:21px;background:#6e6e6e;"></div>
<div style="left:776px;top:270px;width:1px;height:19px;background:#f4f4f4;"></div>
<div style="left:840px;top:270px;width:1px;height:19px;background:#f4f4f4;"></div>
<div style="left:874px;top:270px;width:1px;height:19px;background:#f4f4f4;"></div>
<div style="left:1009px;top:270px;width:1px;height:19px;background:#f4f4f4;"></div>
<div style="left:1073px;top:270px;width:1px;height:19px;background:#f4f4f4;"></div>
<div style="left:1329px;top:270px;width:1px;height:19px;background:#f4f4f4;"></div>
<div style="left:1457px;top:270px;width:1px;height:19px;background:#f4f4f4;"></div>
<div style="left:776px;top:290px;width:1px;height:19px;background:#f4f4f4;"></div>
<div style="left:840px;top:290px;width:1px;height:19px;background:#f4f4f4;"></div>
<div style="left:874px;top:290px;width:1px;height:19px;background:#f4f4f4;"></div>
<div style="left:1009px;top:290px;width:1px;height:19px;background:#f4f4f4;"></div>
<div style="left:1073px;top:290px;width:1px;height:19px;background:#f4f4f4;"></div>
<div style="left:1329px;top:290px;width:1px;height:19px;background:#f4f4f4;"></div>
<div style="left:1457px;top:290px;width:1px;height:19px;background:#f4f4f4;"></div>
<div style="left:776px;top:330px;width:1px;height:19px;background:#f4f4f4;"></div>
<div style="left:840px;top:330px;width:1px;height:19px;background:#f4f4f4;"></div>
<div style="left:874px;top:330px;width:1px;height:19px;background:#f4f4f4;"></div>
<div style="left:1009px;top:330px;width:1px;height:19px;background:#f4f4f4;"></div>
<div style="left:1073px;top:330px;width:1px;height:19px;background:#f4f4f4;"></div>
<div style="left:1329px;top:330px;width:1px;height:19px;background:#f4f4f4;"></div>
<div style="left:1457px;top:330px;width:1px;height:19px;background:#f4f4f4;"></div>
<div style="left:261px;top:370px;width:35px;height:19px;background:#c8d9ea;"></div>
<div class="t" style="top:371.5px;height:16px;line-height:16px;left:272.8px;width:20px;text-align:right;">3</div>
<div style="left:357px;top:370px;width:95px;height:19px;background:#d5d5d5;"></div>
<div style="left:670px;top:370px;width:42px;height:19px;background:#d5d5d5;"></div>
<div style="left:841px;top:370px;width:33px;height:19px;background:#f0f0f0;"></div>
<div style="left:851px;top:373px;width:13px;height:13px;background:#f1f1f1;border:1px solid #b9b9b9;box-sizing:border-box;box-shadow:inset 0 0 0 2px #fff;"></div>
<div class="t" style="top:371.5px;height:16px;line-height:16px;letter-spacing:-0.237px;left:454px;">Adele Vance</div>
<div class="t" style="top:371.5px;height:16px;line-height:16px;letter-spacing:0.379px;left:575.3px;">/Inbox</div>
<div class="t" style="top:371.5px;height:16px;line-height:16px;letter-spacing:-0.072px;left:714px;">focused</div>
<div class="t" style="top:371.5px;height:16px;line-height:16px;letter-spacing:-0.484px;left:778.4px;width:58.4px;overflow:hidden;">Request</div>
<div class="t" style="top:371.5px;height:16px;line-height:16px;letter-spacing:-0.009px;left:875.9px;">Alex Wilber</div>
<div class="t" style="top:371.5px;height:16px;line-height:16px;letter-spacing:0.083px;left:1011.6px;">normal</div>
<div class="t" style="top:371.5px;height:16px;line-height:16px;letter-spacing:0.157px;left:1075px;width:252.6px;overflow:hidden;">group meeting</div>
<div class="t" style="top:371.5px;height:16px;line-height:16px;letter-spacing:-0.154px;left:1328.05px;width:126px;text-align:right;">4/27/2022 10:43 AM</div>
<div class="t" style="top:371.5px;height:16px;line-height:16px;letter-spacing:-0.237px;left:1459.2px;width:70.8px;overflow:hidden;">Adele Vance</div>
<div style="left:261px;top:390px;width:35px;height:19px;background:#c8d9ea;"></div>
<div class="t" style="top:391.5px;height:16px;line-height:16px;left:272.8px;width:20px;text-align:right;">3</div>
<div style="left:357px;top:390px;width:95px;height:19px;background:#d5d5d5;"></div>
<div style="left:670px;top:390px;width:42px;height:19px;background:#d5d5d5;"></div>
<div style="left:777px;top:390px;width:63px;height:19px;background:#d5d5d5;"></div>
<div style="left:841px;top:390px;width:33px;height:19px;background:#f0f0f0;"></div>
<div style="left:851px;top:393px;width:13px;height:13px;background:#f1f1f1;border:1px solid #b9b9b9;box-sizing:border-box;box-shadow:inset 0 0 0 2px #fff;"></div>
<div class="t" style="top:391.5px;height:16px;line-height:16px;letter-spacing:-0.237px;left:454px;">Adele Vance</div>
<div class="t" style="top:391.5px;height:16px;line-height:16px;letter-spacing:0.379px;left:575.3px;">/Inbox</div>
<div class="t" style="top:391.5px;height:16px;line-height:16px;letter-spacing:-0.072px;left:714px;">focused</div>
<div class="t" style="top:391.5px;height:16px;line-height:16px;letter-spacing:0.203px;left:875.9px;">MOD Administrator</div>
<div class="t" style="top:391.5px;height:16px;line-height:16px;letter-spacing:0.083px;left:1011.6px;">normal</div>
<div class="t" style="top:391.5px;height:16px;line-height:16px;letter-spacing:-0.105px;left:1075px;width:252.6px;overflow:hidden;">MOD Administrator shared "Sales Process" with you.</div>
<div class="t" style="top:391.5px;height:16px;line-height:16px;letter-spacing:-0.323px;left:1327.88px;width:126px;text-align:right;">3/30/2022 02:56 PM</div>
<div class="t" style="top:391.5px;height:16px;line-height:16px;letter-spacing:-0.017px;left:1459.2px;width:70.8px;overflow:hidden;">Mark 8 Project Team</div>
<div style="left:261px;top:410px;width:35px;height:19px;background:#c8d9ea;"></div>
<div class="t" style="top:411.5px;height:16px;line-height:16px;left:272.8px;width:20px;text-align:right;">3</div>
<div style="left:357px;top:410px;width:95px;height:19px;background:#d5d5d5;"></div>
<div style="left:670px;top:410px;width:42px;height:19px;background:#d5d5d5;"></div>
<div style="left:777px;top:410px;width:63px;height:19px;background:#d5d5d5;"></div>
<div style="left:841px;top:410px;width:33px;height:19px;background:#f0f0f0;"></div>
<div style="left:851px;top:413px;width:13px;height:13px;background:#f1f1f1;border:1px solid #b9b9b9;box-sizing:border-box;box-shadow:inset 0 0 0 2px #fff;"></div>
<div class="t" style="top:411.5px;height:16px;line-height:16px;letter-spacing:-0.237px;left:454px;">Adele Vance</div>
<div class="t" style="top:411.5px;height:16px;line-height:16px;letter-spacing:0.379px;left:575.3px;">/Inbox</div>
<div class="t" style="top:411.5px;height:16px;line-height:16px;letter-spacing:-0.072px;left:714px;">focused</div>
<div class="t" style="top:411.5px;height:16px;line-height:16px;letter-spacing:0.203px;left:875.9px;">MOD Administrator</div>
<div class="t" style="top:411.5px;height:16px;line-height:16px;letter-spacing:0.083px;left:1011.6px;">normal</div>
<div class="t" style="top:411.5px;height:16px;line-height:16px;letter-spacing:0.035px;left:1075px;width:252.6px;overflow:hidden;">MOD Administrator shared "Org Chart" with you.</div>
<div class="t" style="top:411.5px;height:16px;line-height:16px;letter-spacing:-0.323px;left:1327.88px;width:126px;text-align:right;">3/30/2022 02:38 PM</div>
<div class="t" style="top:411.5px;height:16px;line-height:16px;letter-spacing:-0.367px;left:1459.2px;width:70.8px;overflow:hidden;">[3] DeliaD@M365x393550</div>
<div style="left:261px;top:430px;width:35px;height:19px;background:#a9c9e8;"></div>
<div class="t" style="top:431.5px;height:16px;line-height:16px;color:#fff;left:272.8px;width:20px;text-align:right;">3</div>
<div style="left:297px;top:430px;width:19px;height:19px;background:#fff;border:1px solid #7bb8e9;box-sizing:border-box;"></div>
<div style="left:317px;top:430px;width:19px;height:19px;background:#7bb8e9;"></div>
<div style="left:337px;top:430px;width:19px;height:19px;background:#7bb8e9;"></div>
<div style="left:357px;top:430px;width:95px;height:19px;background:#a9c9e8;"></div>
<div style="left:670px;top:430px;width:42px;height:19px;background:#a9c9e8;"></div>
<div style="left:777px;top:430px;width:63px;height:19px;background:#a9c9e8;"></div>
<div style="left:841px;top:430px;width:33px;height:19px;background:#c2daf1;"></div>
<div style="left:453px;top:430px;width:119px;height:19px;background:#7bb8e9;"></div>
<div style="left:574px;top:430px;width:95px;height:19px;background:#7bb8e9;"></div>
<div style="left:713px;top:430px;width:63px;height:19px;background:#7bb8e9;"></div>
<div style="left:875px;top:430px;width:134px;height:19px;background:#7bb8e9;"></div>
<div style="left:1010px;top:430px;width:63px;height:19px;background:#7bb8e9;"></div>
<div style="left:1074px;top:430px;width:255px;height:19px;background:#7bb8e9;"></div>
<div style="left:1330px;top:430px;width:127px;height:19px;background:#7bb8e9;"></div>
<div style="left:1458px;top:430px;width:72px;height:19px;background:#7bb8e9;"></div>
<div style="left:851px;top:433px;width:13px;height:13px;background:#eef4fa;border:1px solid #b9b9b9;box-sizing:border-box;box-shadow:inset 0 0 0 2px #fff;"></div>
<div class="t" style="top:431.5px;height:16px;line-height:16px;color:#fff;letter-spacing:-0.237px;left:454px;">Adele Vance</div>
<div class="t" style="top:431.5px;height:16px;line-height:16px;color:#fff;letter-spacing:0.379px;left:575.3px;">/Inbox</div>
<div class="t" style="top:431.5px;height:16px;line-height:16px;color:#fff;letter-spacing:-0.072px;left:714px;">focused</div>
<div class="t" style="top:431.5px;height:16px;line-height:16px;color:#fff;letter-spacing:-0.113px;left:875.9px;">SharePoint Online</div>
<div class="t" style="top:431.5px;height:16px;line-height:16px;color:#fff;letter-spacing:0.083px;left:1011.6px;">normal</div>
<div class="t" style="top:431.5px;height:16px;line-height:16px;color:#fff;letter-spacing:-0.041px;left:1075px;width:252.6px;overflow:hidden;">Reminder: "Contoso Marketing Principles" has been shared</div>
<div class="t" style="top:431.5px;height:16px;line-height:16px;color:#fff;letter-spacing:-0.276px;left:1327.92px;width:126px;text-align:right;">3/2/2022 05:24 PM</div>
<div class="t" style="top:431.5px;height:16px;line-height:16px;color:#fff;letter-spacing:-0.237px;left:1459.2px;width:70.8px;overflow:hidden;">Adele Vance</div>
<div style="left:261px;top:450px;width:35px;height:19px;background:#c8d9ea;"></div>
<div class="t" style="top:451.5px;height:16px;line-height:16px;left:272.8px;width:20px;text-align:right;">3</div>
<div style="left:357px;top:450px;width:95px;height:19px;background:#d5d5d5;"></div>
<div style="left:670px;top:450px;width:42px;height:19px;background:#d5d5d5;"></div>
<div style="left:777px;top:450px;width:63px;height:19px;background:#d5d5d5;"></div>
<div style="left:841px;top:450px;width:33px;height:19px;background:#f0f0f0;"></div>
<div style="left:851px;top:453px;width:13px;height:13px;background:#f1f1f1;border:1px solid #b9b9b9;box-sizing:border-box;box-shadow:inset 0 0 0 2px #fff;"></div>
<div class="t" style="top:451.5px;height:16px;line-height:16px;letter-spacing:-0.237px;left:454px;">Adele Vance</div>
<div class="t" style="top:451.5px;height:16px;line-height:16px;letter-spacing:0.379px;left:575.3px;">/Inbox</div>
<div class="t" style="top:451.5px;height:16px;line-height:16px;letter-spacing:-0.072px;left:714px;">focused</div>
<div class="t" style="top:451.5px;height:16px;line-height:16px;letter-spacing:-0.3px;left:875.9px;transform:scaleX(0.9718);transform-origin:left center;">Sonia BOUNARDJIAN</div>
<div class="t" style="top:451.5px;height:16px;line-height:16px;letter-spacing:0.083px;left:1011.6px;">normal</div>
<div class="t" style="top:451.5px;height:16px;line-height:16px;letter-spacing:0.019px;left:1075px;width:252.6px;overflow:hidden;">test</div>
<div class="t" style="top:451.5px;height:16px;line-height:16px;letter-spacing:-0.221px;left:1327.98px;width:126px;text-align:right;">3/1/2022 07:11 PM</div>
<div class="t" style="top:451.5px;height:16px;line-height:16px;letter-spacing:-0.237px;left:1459.2px;width:70.8px;overflow:hidden;">Adele Vance</div>
<div style="left:261px;top:470px;width:35px;height:19px;background:#c8d9ea;"></div>
<div class="t" style="top:471.5px;height:16px;line-height:16px;left:272.8px;width:20px;text-align:right;">3</div>
<div style="left:357px;top:470px;width:95px;height:19px;background:#d5d5d5;"></div>
<div style="left:670px;top:470px;width:42px;height:19px;background:#d5d5d5;"></div>
<div style="left:777px;top:470px;width:63px;height:19px;background:#d5d5d5;"></div>
<div style="left:841px;top:470px;width:33px;height:19px;background:#f0f0f0;"></div>
<div style="left:851px;top:473px;width:13px;height:13px;background:#f1f1f1;border:1px solid #b9b9b9;box-sizing:border-box;box-shadow:inset 0 0 0 2px #fff;"></div>
<div class="t" style="top:471.5px;height:16px;line-height:16px;letter-spacing:-0.237px;left:454px;">Adele Vance</div>
<div class="t" style="top:471.5px;height:16px;line-height:16px;letter-spacing:0.379px;left:575.3px;">/Inbox</div>
<div class="t" style="top:471.5px;height:16px;line-height:16px;letter-spacing:-0.072px;left:714px;">focused</div>
<div class="t" style="top:471.5px;height:16px;line-height:16px;letter-spacing:0.203px;left:875.9px;">MOD Administrator</div>
<div class="t" style="top:471.5px;height:16px;line-height:16px;letter-spacing:0.083px;left:1011.6px;">normal</div>
<div class="t" style="top:471.5px;height:16px;line-height:16px;letter-spacing:0.069px;left:1075px;width:252.6px;overflow:hidden;">MOD Administrator shared "Contoso Marketing Principles"</div>
<div class="t" style="top:471.5px;height:16px;line-height:16px;letter-spacing:-0.323px;left:1327.88px;width:126px;text-align:right;">2/23/2022 05:01 PM</div>
<div class="t" style="top:471.5px;height:16px;line-height:16px;letter-spacing:-0.237px;left:1459.2px;width:70.8px;overflow:hidden;">Adele Vance</div>
<div style="left:261px;top:490px;width:35px;height:19px;background:#c8d9ea;"></div>
<div class="t" style="top:491.5px;height:16px;line-height:16px;left:272.8px;width:20px;text-align:right;">3</div>
<div style="left:357px;top:490px;width:95px;height:19px;background:#d5d5d5;"></div>
<div style="left:670px;top:490px;width:42px;height:19px;background:#d5d5d5;"></div>
<div style="left:777px;top:490px;width:63px;height:19px;background:#d5d5d5;"></div>
<div style="left:841px;top:490px;width:33px;height:19px;background:#f0f0f0;"></div>
<div style="left:851px;top:493px;width:13px;height:13px;background:#f1f1f1;border:1px solid #b9b9b9;box-sizing:border-box;box-shadow:inset 0 0 0 2px #fff;"></div>
<div class="t" style="top:491.5px;height:16px;line-height:16px;letter-spacing:-0.237px;left:454px;">Adele Vance</div>
<div class="t" style="top:491.5px;height:16px;line-height:16px;letter-spacing:0.379px;left:575.3px;">/Inbox</div>
<div class="t" style="top:491.5px;height:16px;line-height:16px;letter-spacing:-0.072px;left:714px;">focused</div>
<div class="t" style="top:491.5px;height:16px;line-height:16px;letter-spacing:-0.3px;left:875.9px;transform:scaleX(0.9718);transform-origin:left center;">Sonia BOUNARDJIAN</div>
<div class="t" style="top:491.5px;height:16px;line-height:16px;letter-spacing:0.083px;left:1011.6px;">normal</div>
<div class="t" style="top:491.5px;height:16px;line-height:16px;letter-spacing:0.019px;left:1075px;width:252.6px;overflow:hidden;">test</div>
<div class="t" style="top:491.5px;height:16px;line-height:16px;letter-spacing:-0.323px;left:1327.88px;width:126px;text-align:right;">1/13/2022 06:32 PM</div>
<div class="t" style="top:491.5px;height:16px;line-height:16px;letter-spacing:-0.237px;left:1459.2px;width:70.8px;overflow:hidden;">Adele Vance</div>
<div style="left:261px;top:510px;width:35px;height:19px;background:#c8d9ea;"></div>
<div class="t" style="top:511.5px;height:16px;line-height:16px;left:272.8px;width:20px;text-align:right;">3</div>
<div style="left:357px;top:510px;width:95px;height:19px;background:#d5d5d5;"></div>
<div style="left:670px;top:510px;width:42px;height:19px;background:#d5d5d5;"></div>
<div style="left:777px;top:510px;width:63px;height:19px;background:#d5d5d5;"></div>
<div style="left:841px;top:510px;width:33px;height:19px;background:#f0f0f0;"></div>
<div style="left:851px;top:513px;width:13px;height:13px;background:#f1f1f1;border:1px solid #b9b9b9;box-sizing:border-box;box-shadow:inset 0 0 0 2px #fff;"></div>
<div class="t" style="top:511.5px;height:16px;line-height:16px;letter-spacing:-0.237px;left:454px;">Adele Vance</div>
<div class="t" style="top:511.5px;height:16px;line-height:16px;letter-spacing:0.379px;left:575.3px;">/Inbox</div>
<div class="t" style="top:511.5px;height:16px;line-height:16px;letter-spacing:-0.072px;left:714px;">focused</div>
<div class="t" style="top:511.5px;height:16px;line-height:16px;letter-spacing:0.203px;left:875.9px;">MOD Administrator</div>
<div class="t" style="top:511.5px;height:16px;line-height:16px;letter-spacing:0.083px;left:1011.6px;">normal</div>
<div class="t" style="top:511.5px;height:16px;line-height:16px;letter-spacing:-0.323px;left:1327.88px;width:126px;text-align:right;">12/9/2021 07:40 PM</div>
<div class="t" style="top:511.5px;height:16px;line-height:16px;letter-spacing:-0.237px;left:1459.2px;width:70.8px;overflow:hidden;">Adele Vance</div>
<div style="left:261px;top:530px;width:35px;height:19px;background:#a9c9e8;"></div>
<div class="t" style="top:531.5px;height:16px;line-height:16px;color:#fff;left:272.8px;width:20px;text-align:right;">3</div>
<div style="left:297px;top:530px;width:19px;height:19px;background:#fff;border:1px solid #7bb8e9;box-sizing:border-box;"></div>
<div style="left:317px;top:530px;width:19px;height:19px;background:#7bb8e9;"></div>
<div style="left:337px;top:530px;width:19px;height:19px;background:#7bb8e9;"></div>
<div style="left:357px;top:530px;width:95px;height:19px;background:#a9c9e8;"></div>
<div style="left:670px;top:530px;width:42px;height:19px;background:#a9c9e8;"></div>
<div style="left:841px;top:530px;width:33px;height:19px;background:#c2daf1;"></div>
<div style="left:453px;top:530px;width:119px;height:19px;background:#7bb8e9;"></div>
<div style="left:574px;top:530px;width:95px;height:19px;background:#7bb8e9;"></div>
<div style="left:713px;top:530px;width:63px;height:19px;background:#7bb8e9;"></div>
<div style="left:875px;top:530px;width:134px;height:19px;background:#7bb8e9;"></div>
<div style="left:1010px;top:530px;width:63px;height:19px;background:#7bb8e9;"></div>
<div style="left:1074px;top:530px;width:255px;height:19px;background:#7bb8e9;"></div>
<div style="left:1330px;top:530px;width:127px;height:19px;background:#7bb8e9;"></div>
<div style="left:1458px;top:530px;width:72px;height:19px;background:#7bb8e9;"></div>
<div style="left:777px;top:530px;width:63px;height:19px;background:#7bb8e9;"></div>
<div style="left:851px;top:533px;width:13px;height:13px;background:#eef4fa;border:1px solid #b9b9b9;box-sizing:border-box;box-shadow:inset 0 0 0 2px #fff;"></div>
<div class="t" style="top:531.5px;height:16px;line-height:16px;color:#fff;letter-spacing:-0.237px;left:454px;">Adele Vance</div>
<div class="t" style="top:531.5px;height:16px;line-height:16px;color:#fff;letter-spacing:0.379px;left:575.3px;">/Inbox</div>
<div class="t" style="top:531.5px;height:16px;line-height:16px;color:#fff;letter-spacing:-0.072px;left:714px;">focused</div>
<div class="t" style="top:531.5px;height:16px;line-height:16px;color:#fff;letter-spacing:-0.159px;left:778.4px;width:58.4px;overflow:hidden;">Cancellation</div>
<div class="t" style="top:531.5px;height:16px;line-height:16px;color:#fff;letter-spacing:-0.009px;left:875.9px;">Alex Wilber</div>
<div class="t" style="top:531.5px;height:16px;line-height:16px;color:#fff;letter-spacing:0.083px;left:1011.6px;">normal</div>
<div class="t" style="top:531.5px;height:16px;line-height:16px;color:#fff;letter-spacing:-0.097px;left:1075px;width:252.6px;overflow:hidden;">Canceled: nested group</div>
<div class="t" style="top:531.5px;height:16px;line-height:16px;color:#fff;letter-spacing:-0.343px;left:1327.86px;width:126px;text-align:right;">10/29/2021 12:25 PM</div>
<div class="t" style="top:531.5px;height:16px;line-height:16px;color:#fff;letter-spacing:-0.3px;left:1459.2px;width:70.8px;overflow:hidden;transform:scaleX(0.9306);transform-origin:left center;">D2</div>
<div style="left:261px;top:550px;width:35px;height:19px;background:#c8d9ea;"></div>
<div class="t" style="top:551.5px;height:16px;line-height:16px;left:272.8px;width:20px;text-align:right;">3</div>
<div style="left:357px;top:550px;width:95px;height:19px;background:#d5d5d5;"></div>
<div style="left:670px;top:550px;width:42px;height:19px;background:#d5d5d5;"></div>
<div style="left:777px;top:550px;width:63px;height:19px;background:#d5d5d5;"></div>
<div style="left:841px;top:550px;width:33px;height:19px;background:#f0f0f0;"></div>
<div style="left:851px;top:553px;width:13px;height:13px;background:#f1f1f1;border:1px solid #b9b9b9;box-sizing:border-box;box-shadow:inset 0 0 0 2px #fff;"></div>
<div class="t" style="top:551.5px;height:16px;line-height:16px;letter-spacing:-0.237px;left:454px;">Adele Vance</div>
<div class="t" style="top:551.5px;height:16px;line-height:16px;letter-spacing:0.379px;left:575.3px;">/Inbox</div>
<div class="t" style="top:551.5px;height:16px;line-height:16px;letter-spacing:-0.072px;left:714px;">focused</div>
<div class="t" style="top:551.5px;height:16px;line-height:16px;letter-spacing:-0.113px;left:875.9px;">SharePoint Online</div>
<div class="t" style="top:551.5px;height:16px;line-height:16px;letter-spacing:0.083px;left:1011.6px;">normal</div>
<div class="t" style="top:551.5px;height:16px;line-height:16px;letter-spacing:-0.053px;left:1075px;width:252.6px;overflow:hidden;">Reminder: "My file1" has been shared with you.</div>
<div class="t" style="top:551.5px;height:16px;line-height:16px;letter-spacing:-0.343px;left:1327.86px;width:126px;text-align:right;">10/28/2021 03:42 PM</div>
<div class="t" style="top:551.5px;height:16px;line-height:16px;letter-spacing:-0.237px;left:1459.2px;width:70.8px;overflow:hidden;">Adele Vance</div>
<div style="left:261px;top:570px;width:35px;height:19px;background:#a9c9e8;"></div>
<div class="t" style="top:571.5px;height:16px;line-height:16px;color:#fff;left:272.8px;width:20px;text-align:right;">3</div>
<div style="left:297px;top:570px;width:19px;height:19px;background:#fff;border:1px solid #7bb8e9;box-sizing:border-box;"></div>
<div style="left:317px;top:570px;width:19px;height:19px;background:#7bb8e9;"></div>
<div style="left:337px;top:570px;width:19px;height:19px;background:#7bb8e9;"></div>
<div style="left:357px;top:570px;width:95px;height:19px;background:#a9c9e8;"></div>
<div style="left:670px;top:570px;width:42px;height:19px;background:#a9c9e8;"></div>
<div style="left:841px;top:570px;width:33px;height:19px;background:#c2daf1;"></div>
<div style="left:453px;top:570px;width:119px;height:19px;background:#7bb8e9;"></div>
<div style="left:574px;top:570px;width:95px;height:19px;background:#7bb8e9;"></div>
<div style="left:713px;top:570px;width:63px;height:19px;background:#7bb8e9;"></div>
<div style="left:875px;top:570px;width:134px;height:19px;background:#7bb8e9;"></div>
<div style="left:1010px;top:570px;width:63px;height:19px;background:#7bb8e9;"></div>
<div style="left:1074px;top:570px;width:255px;height:19px;background:#7bb8e9;"></div>
<div style="left:1330px;top:570px;width:127px;height:19px;background:#7bb8e9;"></div>
<div style="left:1458px;top:570px;width:72px;height:19px;background:#7bb8e9;"></div>
<div style="left:777px;top:570px;width:63px;height:19px;background:#7bb8e9;"></div>
<div style="left:851px;top:573px;width:13px;height:13px;background:#eef4fa;border:1px solid #b9b9b9;box-sizing:border-box;box-shadow:inset 0 0 0 2px #fff;"></div>
<div class="t" style="top:571.5px;height:16px;line-height:16px;color:#fff;letter-spacing:-0.237px;left:454px;">Adele Vance</div>
<div class="t" style="top:571.5px;height:16px;line-height:16px;color:#fff;letter-spacing:0.379px;left:575.3px;">/Inbox</div>
<div class="t" style="top:571.5px;height:16px;line-height:16px;color:#fff;letter-spacing:-0.072px;left:714px;">focused</div>
<div class="t" style="top:571.5px;height:16px;line-height:16px;color:#fff;letter-spacing:-0.484px;left:778.4px;width:58.4px;overflow:hidden;">Request</div>
<div class="t" style="top:571.5px;height:16px;line-height:16px;color:#fff;letter-spacing:0.203px;left:875.9px;">MOD Administrator</div>
<div class="t" style="top:571.5px;height:16px;line-height:16px;color:#fff;letter-spacing:0.083px;left:1011.6px;">normal</div>
<div class="t" style="top:571.5px;height:16px;line-height:16px;color:#fff;letter-spacing:0.147px;left:1075px;width:252.6px;overflow:hidden;">Brainstorming</div>
<div class="t" style="top:571.5px;height:16px;line-height:16px;color:#fff;letter-spacing:-0.343px;left:1327.86px;width:126px;text-align:right;">10/26/2021 04:00 PM</div>
<div class="t" style="top:571.5px;height:16px;line-height:16px;color:#fff;letter-spacing:-0.152px;left:1459.2px;width:70.8px;overflow:hidden;">[2] Adele Vance</div>
<div style="left:261px;top:590px;width:35px;height:19px;background:#c8d9ea;"></div>
<div class="t" style="top:591.5px;height:16px;line-height:16px;left:272.8px;width:20px;text-align:right;">3</div>
<div style="left:357px;top:590px;width:95px;height:19px;background:#d5d5d5;"></div>
<div style="left:670px;top:590px;width:42px;height:19px;background:#d5d5d5;"></div>
<div style="left:841px;top:590px;width:33px;height:19px;background:#f0f0f0;"></div>
<div style="left:851px;top:593px;width:13px;height:13px;background:#f1f1f1;border:1px solid #b9b9b9;box-sizing:border-box;box-shadow:inset 0 0 0 2px #fff;"></div>
<div class="t" style="top:591.5px;height:16px;line-height:16px;letter-spacing:-0.237px;left:454px;">Adele Vance</div>
<div class="t" style="top:591.5px;height:16px;line-height:16px;letter-spacing:0.379px;left:575.3px;">/Inbox</div>
<div class="t" style="top:591.5px;height:16px;line-height:16px;letter-spacing:-0.072px;left:714px;">focused</div>
<div class="t" style="top:591.5px;height:16px;line-height:16px;letter-spacing:-0.484px;left:778.4px;width:58.4px;overflow:hidden;">Request</div>
<div class="t" style="top:591.5px;height:16px;line-height:16px;letter-spacing:0.203px;left:875.9px;">MOD Administrator</div>
<div class="t" style="top:591.5px;height:16px;line-height:16px;letter-spacing:0.083px;left:1011.6px;">normal</div>
<div class="t" style="top:591.5px;height:16px;line-height:16px;letter-spacing:0.201px;left:1075px;width:252.6px;overflow:hidden;">findthiseventonly</div>
<div class="t" style="top:591.5px;height:16px;line-height:16px;letter-spacing:-0.343px;left:1327.86px;width:126px;text-align:right;">10/26/2021 01:34 PM</div>
<div class="t" style="top:591.5px;height:16px;line-height:16px;letter-spacing:-0.08px;left:1459.2px;width:70.8px;overflow:hidden;">[2] Alex Wilber</div>
<div style="left:261px;top:610px;width:35px;height:19px;background:#c8d9ea;"></div>
<div class="t" style="top:611.5px;height:16px;line-height:16px;left:272.8px;width:20px;text-align:right;">3</div>
<div style="left:357px;top:610px;width:95px;height:19px;background:#d5d5d5;"></div>
<div style="left:670px;top:610px;width:42px;height:19px;background:#d5d5d5;"></div>
<div style="left:777px;top:610px;width:63px;height:19px;background:#d5d5d5;"></div>
<div style="left:841px;top:610px;width:33px;height:19px;background:#f0f0f0;"></div>
<div style="left:851px;top:613px;width:13px;height:13px;background:#f1f1f1;border:1px solid #b9b9b9;box-sizing:border-box;box-shadow:inset 0 0 0 2px #fff;"></div>
<div class="t" style="top:611.5px;height:16px;line-height:16px;letter-spacing:-0.237px;left:454px;">Adele Vance</div>
<div class="t" style="top:611.5px;height:16px;line-height:16px;letter-spacing:0.379px;left:575.3px;">/Inbox</div>
<div class="t" style="top:611.5px;height:16px;line-height:16px;letter-spacing:-0.072px;left:714px;">focused</div>
<div class="t" style="top:611.5px;height:16px;line-height:16px;letter-spacing:0.203px;left:875.9px;">MOD Administrator</div>
<div class="t" style="top:611.5px;height:16px;line-height:16px;letter-spacing:0.083px;left:1011.6px;">normal</div>
<div class="t" style="top:611.5px;height:16px;line-height:16px;letter-spacing:0.098px;left:1075px;width:252.6px;overflow:hidden;">MOD Administrator shared "My file1" with you.</div>
<div class="t" style="top:611.5px;height:16px;line-height:16px;letter-spacing:-0.343px;left:1327.86px;width:126px;text-align:right;">10/21/2021 03:01 PM</div>
<div class="t" style="top:611.5px;height:16px;line-height:16px;letter-spacing:-0.237px;left:1459.2px;width:70.8px;overflow:hidden;">Adele Vance</div>
<div style="left:261px;top:630px;width:35px;height:19px;background:#c8d9ea;"></div>
<div class="t" style="top:631.5px;height:16px;line-height:16px;left:272.8px;width:20px;text-align:right;">3</div>
<div style="left:357px;top:630px;width:95px;height:19px;background:#d5d5d5;"></div>
<div style="left:670px;top:630px;width:42px;height:19px;background:#d5d5d5;"></div>
<div style="left:777px;top:630px;width:63px;height:19px;background:#d5d5d5;"></div>
<div style="left:841px;top:630px;width:33px;height:19px;background:#f0f0f0;"></div>
<div style="left:851px;top:633px;width:13px;height:13px;background:#f1f1f1;border:1px solid #b9b9b9;box-sizing:border-box;box-shadow:inset 0 0 0 2px #fff;"></div>
<div class="t" style="top:631.5px;height:16px;line-height:16px;letter-spacing:-0.237px;left:454px;">Adele Vance</div>
<div class="t" style="top:631.5px;height:16px;line-height:16px;letter-spacing:0.379px;left:575.3px;">/Inbox</div>
<div class="t" style="top:631.5px;height:16px;line-height:16px;letter-spacing:-0.072px;left:714px;">focused</div>
<div class="t" style="top:631.5px;height:16px;line-height:16px;letter-spacing:0.203px;left:875.9px;">MOD Administrator</div>
<div class="t" style="top:631.5px;height:16px;line-height:16px;letter-spacing:0.083px;left:1011.6px;">normal</div>
<div class="t" style="top:631.5px;height:16px;line-height:16px;letter-spacing:0.086px;left:1075px;width:252.6px;overflow:hidden;">MOD Administrator shared "t1" with you.</div>
<div class="t" style="top:631.5px;height:16px;line-height:16px;letter-spacing:-0.343px;left:1327.86px;width:126px;text-align:right;">10/12/2021 12:44 PM</div>
<div class="t" style="top:631.5px;height:16px;line-height:16px;letter-spacing:-0.152px;left:1459.2px;width:70.8px;overflow:hidden;">[2] Adele Vance</div>
<div style="left:261px;top:650px;width:35px;height:19px;background:#a9c9e8;"></div>
<div class="t" style="top:651.5px;height:16px;line-height:16px;color:#fff;left:272.8px;width:20px;text-align:right;">3</div>
<div style="left:297px;top:650px;width:19px;height:19px;background:#fff;border:1px solid #7bb8e9;box-sizing:border-box;"></div>
<div style="left:317px;top:650px;width:19px;height:19px;background:#7bb8e9;"></div>
<div style="left:337px;top:650px;width:19px;height:19px;background:#7bb8e9;"></div>
<div style="left:357px;top:650px;width:95px;height:19px;background:#a9c9e8;"></div>
<div style="left:670px;top:650px;width:42px;height:19px;background:#a9c9e8;"></div>
<div style="left:841px;top:650px;width:33px;height:19px;background:#c2daf1;"></div>
<div style="left:453px;top:650px;width:119px;height:19px;background:#7bb8e9;"></div>
<div style="left:574px;top:650px;width:95px;height:19px;background:#7bb8e9;"></div>
<div style="left:713px;top:650px;width:63px;height:19px;background:#7bb8e9;"></div>
<div style="left:875px;top:650px;width:134px;height:19px;background:#7bb8e9;"></div>
<div style="left:1010px;top:650px;width:63px;height:19px;background:#7bb8e9;"></div>
<div style="left:1074px;top:650px;width:255px;height:19px;background:#7bb8e9;"></div>
<div style="left:1330px;top:650px;width:127px;height:19px;background:#7bb8e9;"></div>
<div style="left:1458px;top:650px;width:72px;height:19px;background:#7bb8e9;"></div>
<div style="left:777px;top:650px;width:63px;height:19px;background:#7bb8e9;"></div>
<div style="left:851px;top:653px;width:13px;height:13px;background:#eef4fa;border:1px solid #b9b9b9;box-sizing:border-box;box-shadow:inset 0 0 0 2px #fff;"></div>
<div class="t" style="top:651.5px;height:16px;line-height:16px;color:#fff;letter-spacing:-0.237px;left:454px;">Adele Vance</div>
<div class="t" style="top:651.5px;height:16px;line-height:16px;color:#fff;letter-spacing:0.379px;left:575.3px;">/Inbox</div>
<div class="t" style="top:651.5px;height:16px;line-height:16px;color:#fff;letter-spacing:-0.072px;left:714px;">focused</div>
<div class="t" style="top:651.5px;height:16px;line-height:16px;color:#fff;letter-spacing:-0.159px;left:778.4px;width:58.4px;overflow:hidden;">Cancellation</div>
<div class="t" style="top:651.5px;height:16px;line-height:16px;color:#fff;letter-spacing:0.203px;left:875.9px;">MOD Administrator</div>
<div class="t" style="top:651.5px;height:16px;line-height:16px;color:#fff;letter-spacing:0.083px;left:1011.6px;">normal</div>
<div class="t" style="top:651.5px;height:16px;line-height:16px;color:#fff;letter-spacing:-0.192px;left:1075px;width:252.6px;overflow:hidden;">Canceled: delete this please</div>
<div class="t" style="top:651.5px;height:16px;line-height:16px;color:#fff;letter-spacing:-0.323px;left:1327.88px;width:126px;text-align:right;">10/1/2021 02:26 PM</div>
<div class="t" style="top:651.5px;height:16px;line-height:16px;color:#fff;letter-spacing:-0.057px;left:1459.2px;width:70.8px;overflow:hidden;">[11] Lego builders</div>
<div style="left:261px;top:670px;width:35px;height:19px;background:#c8d9ea;"></div>
<div class="t" style="top:671.5px;height:16px;line-height:16px;left:272.8px;width:20px;text-align:right;">3</div>
<div style="left:357px;top:670px;width:95px;height:19px;background:#d5d5d5;"></div>
<div style="left:670px;top:670px;width:42px;height:19px;background:#d5d5d5;"></div>
<div style="left:777px;top:670px;width:63px;height:19px;background:#d5d5d5;"></div>
<div style="left:841px;top:670px;width:33px;height:19px;background:#f0f0f0;"></div>
<div style="left:851px;top:673px;width:13px;height:13px;background:#f1f1f1;border:1px solid #b9b9b9;box-sizing:border-box;box-shadow:inset 0 0 0 2px #fff;"></div>
<div class="t" style="top:671.5px;height:16px;line-height:16px;letter-spacing:-0.237px;left:454px;">Adele Vance</div>
<div class="t" style="top:671.5px;height:16px;line-height:16px;letter-spacing:0.379px;left:575.3px;">/Inbox</div>
<div class="t" style="top:671.5px;height:16px;line-height:16px;letter-spacing:-0.072px;left:714px;">focused</div>
<div class="t" style="top:671.5px;height:16px;line-height:16px;letter-spacing:0.203px;left:875.9px;">MOD Administrator</div>
<div class="t" style="top:671.5px;height:16px;line-height:16px;letter-spacing:0.083px;left:1011.6px;">normal</div>
<div class="t" style="top:671.5px;height:16px;line-height:16px;letter-spacing:-0.221px;left:1075px;width:252.6px;overflow:hidden;">Re: another day</div>
<div class="t" style="top:671.5px;height:16px;line-height:16px;letter-spacing:-0.323px;left:1327.88px;width:126px;text-align:right;">9/23/2021 02:39 PM</div>
<div class="t" style="top:671.5px;height:16px;line-height:16px;letter-spacing:-0.091px;left:1459.2px;width:70.8px;overflow:hidden;">[5] Diego Siciliani</div>
<div style="left:261px;top:690px;width:35px;height:19px;background:#c8d9ea;"></div>
<div class="t" style="top:691.5px;height:16px;line-height:16px;left:272.8px;width:20px;text-align:right;">3</div>
<div style="left:357px;top:690px;width:95px;height:19px;background:#d5d5d5;"></div>
<div style="left:670px;top:690px;width:42px;height:19px;background:#d5d5d5;"></div>
<div style="left:777px;top:690px;width:63px;height:19px;background:#d5d5d5;"></div>
<div style="left:841px;top:690px;width:33px;height:19px;background:#f0f0f0;"></div>
<div style="left:851px;top:693px;width:13px;height:13px;background:#f1f1f1;border:1px solid #b9b9b9;box-sizing:border-box;box-shadow:inset 0 0 0 2px #fff;"></div>
<div class="t" style="top:691.5px;height:16px;line-height:16px;letter-spacing:-0.237px;left:454px;">Adele Vance</div>
<div class="t" style="top:691.5px;height:16px;line-height:16px;letter-spacing:0.379px;left:575.3px;">/Inbox</div>
<div class="t" style="top:691.5px;height:16px;line-height:16px;letter-spacing:-0.072px;left:714px;">focused</div>
<div class="t" style="top:691.5px;height:16px;line-height:16px;letter-spacing:0.203px;left:875.9px;">MOD Administrator</div>
<div class="t" style="top:691.5px;height:16px;line-height:16px;letter-spacing:0.083px;left:1011.6px;">normal</div>
<div class="t" style="top:691.5px;height:16px;line-height:16px;letter-spacing:-0.221px;left:1075px;width:252.6px;overflow:hidden;">Re: another day</div>
<div class="t" style="top:691.5px;height:16px;line-height:16px;letter-spacing:-0.323px;left:1327.88px;width:126px;text-align:right;">9/23/2021 02:34 PM</div>
<div class="t" style="top:691.5px;height:16px;line-height:16px;letter-spacing:-0.091px;left:1459.2px;width:70.8px;overflow:hidden;">[6] Diego Siciliani</div>
<div style="left:261px;top:710px;width:35px;height:19px;background:#c8d9ea;"></div>
<div class="t" style="top:711.5px;height:16px;line-height:16px;left:272.8px;width:20px;text-align:right;">3</div>
<div style="left:357px;top:710px;width:95px;height:19px;background:#d5d5d5;"></div>
<div style="left:670px;top:710px;width:42px;height:19px;background:#d5d5d5;"></div>
<div style="left:777px;top:710px;width:63px;height:19px;background:#d5d5d5;"></div>
<div style="left:841px;top:710px;width:33px;height:19px;background:#f0f0f0;"></div>
<div style="left:851px;top:713px;width:13px;height:13px;background:#f1f1f1;border:1px solid #b9b9b9;box-sizing:border-box;box-shadow:inset 0 0 0 2px #fff;"></div>
<div class="t" style="top:711.5px;height:16px;line-height:16px;letter-spacing:-0.237px;left:454px;">Adele Vance</div>
<div class="t" style="top:711.5px;height:16px;line-height:16px;letter-spacing:0.379px;left:575.3px;">/Inbox</div>
<div class="t" style="top:711.5px;height:16px;line-height:16px;letter-spacing:-0.072px;left:714px;">focused</div>
<div class="t" style="top:711.5px;height:16px;line-height:16px;letter-spacing:0.203px;left:875.9px;">MOD Administrator</div>
<div class="t" style="top:711.5px;height:16px;line-height:16px;letter-spacing:0.083px;left:1011.6px;">normal</div>
<div class="t" style="top:711.5px;height:16px;line-height:16px;letter-spacing:-0.221px;left:1075px;width:252.6px;overflow:hidden;">Re: another day</div>
<div class="t" style="top:711.5px;height:16px;line-height:16px;letter-spacing:-0.323px;left:1327.88px;width:126px;text-align:right;">9/23/2021 02:24 PM</div>
<div class="t" style="top:711.5px;height:16px;line-height:16px;letter-spacing:-0.091px;left:1459.2px;width:70.8px;overflow:hidden;">[5] Diego Siciliani</div>
<div style="left:261px;top:389px;width:1269px;height:1px;background:#f1f1f1;"></div>
<div style="left:261px;top:409px;width:1269px;height:1px;background:#f1f1f1;"></div>
<div style="left:261px;top:429px;width:1269px;height:1px;background:#f1f1f1;"></div>
<div style="left:261px;top:449px;width:1269px;height:1px;background:#f1f1f1;"></div>
<div style="left:261px;top:469px;width:1269px;height:1px;background:#f1f1f1;"></div>
<div style="left:261px;top:489px;width:1269px;height:1px;background:#f1f1f1;"></div>
<div style="left:261px;top:509px;width:1269px;height:1px;background:#f1f1f1;"></div>
<div style="left:261px;top:529px;width:1269px;height:1px;background:#f1f1f1;"></div>
<div style="left:261px;top:549px;width:1269px;height:1px;background:#f1f1f1;"></div>
<div style="left:261px;top:569px;width:1269px;height:1px;background:#f1f1f1;"></div>
<div style="left:261px;top:589px;width:1269px;height:1px;background:#f1f1f1;"></div>
<div style="left:261px;top:609px;width:1269px;height:1px;background:#f1f1f1;"></div>
<div style="left:261px;top:629px;width:1269px;height:1px;background:#f1f1f1;"></div>
<div style="left:261px;top:649px;width:1269px;height:1px;background:#f1f1f1;"></div>
<div style="left:261px;top:669px;width:1269px;height:1px;background:#f1f1f1;"></div>
<div style="left:261px;top:689px;width:1269px;height:1px;background:#f1f1f1;"></div>
<div style="left:261px;top:709px;width:1269px;height:1px;background:#f1f1f1;"></div>
<div style="left:261px;top:729px;width:1269px;height:1px;background:#f1f1f1;"></div>
<div style="left:296px;top:370px;width:1px;height:357px;background:#f3f3f3;"></div>
<div style="left:316px;top:370px;width:1px;height:357px;background:#f3f3f3;"></div>
<div style="left:336px;top:370px;width:1px;height:357px;background:#f3f3f3;"></div>
<div style="left:356px;top:370px;width:1px;height:357px;background:#f3f3f3;"></div>
<div style="left:452px;top:370px;width:1px;height:357px;background:#f1f1f1;"></div>
<div style="left:669px;top:370px;width:1px;height:357px;background:#f1f1f1;"></div>
<div style="left:712px;top:370px;width:1px;height:357px;background:#f1f1f1;"></div>
<div style="left:776px;top:370px;width:1px;height:357px;background:#f1f1f1;"></div>
<div style="left:840px;top:370px;width:1px;height:357px;background:#f1f1f1;"></div>
<div style="left:874px;top:370px;width:1px;height:357px;background:#f1f1f1;"></div>
<div style="left:1009px;top:370px;width:1px;height:357px;background:#f1f1f1;"></div>
<div style="left:1073px;top:370px;width:1px;height:357px;background:#f1f1f1;"></div>
<div style="left:1329px;top:370px;width:1px;height:357px;background:#f1f1f1;"></div>
<div style="left:1457px;top:370px;width:1px;height:357px;background:#f1f1f1;"></div>
<div style="left:572px;top:230px;width:1px;height:497px;background:#46505e;"></div>
<svg style="left:0;top:0;z-index:2" width="1543" height="727" viewBox="0 0 1543 727"><rect x="227.0" y="216.4" width="9" height="6.4" rx="0.8" fill="#e8aa52"/><path d="M228.9 216.6 V215.2 A2.6 2.6 0 0 1 234.1 215.2 V216.6" fill="none" stroke="#e8aa52" stroke-width="1.5"/><rect x="230.8" y="218.4" width="1.4" height="2.6" fill="#fbe9cf"/><rect x="301.0" y="216.4" width="9" height="6.4" rx="0.8" fill="#e8aa52"/><path d="M302.9 216.6 V215.2 A2.6 2.6 0 0 1 308.1 215.2 V216.6" fill="none" stroke="#e8aa52" stroke-width="1.5"/><rect x="304.8" y="218.4" width="1.4" height="2.6" fill="#fbe9cf"/><rect x="321.0" y="216.4" width="9" height="6.4" rx="0.8" fill="#e8aa52"/><path d="M322.9 216.6 V215.2 A2.6 2.6 0 0 1 328.1 215.2 V216.6" fill="none" stroke="#e8aa52" stroke-width="1.5"/><rect x="324.8" y="218.4" width="1.4" height="2.6" fill="#fbe9cf"/><rect x="340.8" y="216.4" width="9" height="6.4" rx="0.8" fill="#e8aa52"/><path d="M342.7 216.6 V215.2 A2.6 2.6 0 0 1 347.90000000000003 215.2 V216.6" fill="none" stroke="#e8aa52" stroke-width="1.5"/><rect x="344.6" y="218.4" width="1.4" height="2.6" fill="#fbe9cf"/><path d="M358.6 215.2 L364.4 218.2 L358.6 221.2 L360 218.2Z" fill="#111"/><rect x="227" y="232.2" width="15.6" height="15.5" fill="#fff"/><rect x="228" y="233.2" width="13.6" height="13.5" fill="#2b3954"/><rect x="229.9" y="238.8" width="9.8" height="2.6" fill="#fff"/><circle cx="326" cy="235.6" r="3.6" fill="#2a7cc3"/><path d="M319.2 245.6 Q319.2 240.4 323 240 Q326 241.6 329 240 Q332.8 240.4 332.8 245.6 Q332.8 246.4 332 246.4 H320 Q319.2 246.4 319.2 245.6Z" fill="#2a7cc3"/><rect x="246" y="252.2" width="15.6" height="15.5" fill="#fff"/><rect x="247" y="253.2" width="13.6" height="13.5" fill="#2b3954"/><rect x="248.9" y="258.8" width="9.8" height="2.6" fill="#fff"/><rect x="252.5" y="255.2" width="2.6" height="9.8" fill="#fff"/><path d="M319.2 254 Q319.2 253.2 320 253.2 H323.6 L325 254.8 H332 Q332.8 254.8 332.8 255.6 V258.4 H323.4 V262.8 H320.4 Q319.2 262.8 319.2 261.6Z" fill="#2a7cc3"/><rect x="324.8" y="259.6" width="8" height="6.2" fill="#fff" stroke="#2a7cc3" stroke-width="1.1"/><path d="M325 260 L328.8 263 L332.6 260" fill="none" stroke="#2a7cc3" stroke-width="1"/><rect x="246.6" y="273.1" width="14.4" height="13.8" fill="#9bb3d0" stroke="#fff" stroke-width="1.1"/><path d="M247.2 286.3 L260.4 273.7" stroke="#fff" stroke-width="1"/><path d="M319.2 274 Q319.2 273.2 320 273.2 H323.6 L325 274.8 H332 Q332.8 274.8 332.8 275.6 V278.4 H323.4 V282.8 H320.4 Q319.2 282.8 319.2 281.6Z" fill="#2a7cc3"/><rect x="324.8" y="279.6" width="8" height="6.2" fill="#fff" stroke="#2a7cc3" stroke-width="1.1"/><path d="M325 280 L328.8 283 L332.6 280" fill="none" stroke="#2a7cc3" stroke-width="1"/><rect x="246.6" y="293.1" width="14.4" height="13.8" fill="#9bb3d0" stroke="#fff" stroke-width="1.1"/><path d="M247.2 306.3 L260.4 293.7" stroke="#fff" stroke-width="1"/><path d="M319.2 294 Q319.2 293.2 320 293.2 H323.6 L325 294.8 H332 Q332.8 294.8 332.8 295.6 V298.4 H323.4 V302.8 H320.4 Q319.2 302.8 319.2 301.6Z" fill="#2a7cc3"/><rect x="324.8" y="299.6" width="8" height="6.2" fill="#fff" stroke="#2a7cc3" stroke-width="1.1"/><path d="M325 300 L328.8 303 L332.6 300" fill="none" stroke="#2a7cc3" stroke-width="1"/><rect x="246" y="312.2" width="15.6" height="15.5" fill="#fff"/><rect x="247" y="313.2" width="13.6" height="13.5" fill="#2b3954"/><rect x="248.9" y="318.8" width="9.8" height="2.6" fill="#fff"/><rect x="252.5" y="315.2" width="2.6" height="9.8" fill="#fff"/><path d="M319.2 314 Q319.2 313.2 320 313.2 H323.6 L325 314.8 H332 Q332.8 314.8 332.8 315.6 V318.4 H323.4 V322.8 H320.4 Q319.2 322.8 319.2 321.6Z" fill="#2a7cc3"/><rect x="324.8" y="319.6" width="8" height="6.2" fill="#fff" stroke="#2a7cc3" stroke-width="1.1"/><path d="M325 320 L328.8 323 L332.6 320" fill="none" stroke="#2a7cc3" stroke-width="1"/><rect x="246.6" y="333.1" width="14.4" height="13.8" fill="#9bb3d0" stroke="#fff" stroke-width="1.1"/><path d="M247.2 346.3 L260.4 333.7" stroke="#fff" stroke-width="1"/><path d="M319.2 334 Q319.2 333.2 320 333.2 H323.6 L325 334.8 H332 Q332.8 334.8 332.8 335.6 V338.4 H323.4 V342.8 H320.4 Q319.2 342.8 319.2 341.6Z" fill="#2a7cc3"/><rect x="324.8" y="339.6" width="8" height="6.2" fill="#fff" stroke="#2a7cc3" stroke-width="1.1"/><path d="M325 340 L328.8 343 L332.6 340" fill="none" stroke="#2a7cc3" stroke-width="1"/><rect x="246" y="352.2" width="15.6" height="15.5" fill="#fff"/><rect x="247" y="353.2" width="13.6" height="13.5" fill="#2b3954"/><rect x="248.9" y="358.8" width="9.8" height="2.6" fill="#fff"/><path d="M319.2 354 Q319.2 353.2 320 353.2 H323.6 L325 354.8 H332 Q332.8 354.8 332.8 355.6 V358.4 H323.4 V362.8 H320.4 Q319.2 362.8 319.2 361.6Z" fill="#2a7cc3"/><rect x="324.8" y="359.6" width="8" height="6.2" fill="#fff" stroke="#2a7cc3" stroke-width="1.1"/><path d="M325 360 L328.8 363 L332.6 360" fill="none" stroke="#2a7cc3" stroke-width="1"/><circle cx="306" cy="379.2" r="5.9" fill="#fff" stroke="#8a8a8a" stroke-width="1.1"/><circle cx="306" cy="379.2" r="3.1" fill="#a2a2a2"/><rect x="319" y="374.5" width="14.1" height="9" fill="#2a7cc3"/><path d="M319.8 375.5 L326.05 380 L332.3 375.5" fill="none" stroke="#fff" stroke-width="1.2"/><circle cx="306" cy="399.2" r="5.9" fill="#fff" stroke="#8a8a8a" stroke-width="1.1"/><circle cx="306" cy="399.2" r="3.1" fill="#a2a2a2"/><rect x="319" y="394.5" width="14.1" height="9" fill="#2a7cc3"/><path d="M319.8 395.5 L326.05 400 L332.3 395.5" fill="none" stroke="#fff" stroke-width="1.2"/><circle cx="306" cy="419.2" r="5.9" fill="#fff" stroke="#8a8a8a" stroke-width="1.1"/><circle cx="306" cy="419.2" r="3.1" fill="#a2a2a2"/><rect x="319" y="414.5" width="14.1" height="9" fill="#2a7cc3"/><path d="M319.8 415.5 L326.05 420 L332.3 415.5" fill="none" stroke="#fff" stroke-width="1.2"/><circle cx="306" cy="439.2" r="5.9" fill="#fff" stroke="#8a8a8a" stroke-width="1.1"/><circle cx="306" cy="439.2" r="3.1" fill="#a2a2a2"/><rect x="318" y="433.5" width="16.1" height="11" rx="1" fill="#fff"/><rect x="319" y="434.5" width="14.1" height="9" fill="#2a7cc3"/><path d="M319.8 435.5 L326.05 440 L332.3 435.5" fill="none" stroke="#fff" stroke-width="1.2"/><circle cx="306" cy="459.2" r="5.9" fill="#fff" stroke="#8a8a8a" stroke-width="1.1"/><circle cx="306" cy="459.2" r="3.1" fill="#a2a2a2"/><rect x="319" y="454.5" width="14.1" height="9" fill="#2a7cc3"/><path d="M319.8 455.5 L326.05 460 L332.3 455.5" fill="none" stroke="#fff" stroke-width="1.2"/><circle cx="306" cy="479.2" r="5.9" fill="#fff" stroke="#8a8a8a" stroke-width="1.1"/><circle cx="306" cy="479.2" r="3.1" fill="#a2a2a2"/><rect x="319" y="474.5" width="14.1" height="9" fill="#2a7cc3"/><path d="M319.8 475.5 L326.05 480 L332.3 475.5" fill="none" stroke="#fff" stroke-width="1.2"/><circle cx="306" cy="499.2" r="5.9" fill="#fff" stroke="#8a8a8a" stroke-width="1.1"/><circle cx="306" cy="499.2" r="3.1" fill="#a2a2a2"/><rect x="319" y="494.5" width="14.1" height="9" fill="#2a7cc3"/><path d="M319.8 495.5 L326.05 500 L332.3 495.5" fill="none" stroke="#fff" stroke-width="1.2"/><circle cx="306" cy="519.2" r="5.9" fill="#fff" stroke="#8a8a8a" stroke-width="1.1"/><circle cx="306" cy="519.2" r="3.1" fill="#a2a2a2"/><rect x="319" y="514.5" width="14.1" height="9" fill="#2a7cc3"/><path d="M319.8 515.5 L326.05 520 L332.3 515.5" fill="none" stroke="#fff" stroke-width="1.2"/><circle cx="306" cy="539.2" r="5.9" fill="#fff" stroke="#8a8a8a" stroke-width="1.1"/><circle cx="306" cy="539.2" r="3.1" fill="#a2a2a2"/><rect x="318" y="533.5" width="16.1" height="11" rx="1" fill="#fff"/><rect x="319" y="534.5" width="14.1" height="9" fill="#2a7cc3"/><path d="M319.8 535.5 L326.05 540 L332.3 535.5" fill="none" stroke="#fff" stroke-width="1.2"/><circle cx="306" cy="559.2" r="5.9" fill="#fff" stroke="#8a8a8a" stroke-width="1.1"/><circle cx="306" cy="559.2" r="3.1" fill="#a2a2a2"/><rect x="319" y="554.5" width="14.1" height="9" fill="#2a7cc3"/><path d="M319.8 555.5 L326.05 560 L332.3 555.5" fill="none" stroke="#fff" stroke-width="1.2"/><circle cx="306" cy="579.2" r="5.9" fill="#fff" stroke="#8a8a8a" stroke-width="1.1"/><circle cx="306" cy="579.2" r="3.1" fill="#a2a2a2"/><rect x="318" y="573.5" width="16.1" height="11" rx="1" fill="#fff"/><rect x="319" y="574.5" width="14.1" height="9" fill="#2a7cc3"/><path d="M319.8 575.5 L326.05 580 L332.3 575.5" fill="none" stroke="#fff" stroke-width="1.2"/><circle cx="306" cy="599.2" r="5.9" fill="#fff" stroke="#8a8a8a" stroke-width="1.1"/><circle cx="306" cy="599.2" r="3.1" fill="#a2a2a2"/><rect x="319" y="594.5" width="14.1" height="9" fill="#2a7cc3"/><path d="M319.8 595.5 L326.05 600 L332.3 595.5" fill="none" stroke="#fff" stroke-width="1.2"/><circle cx="306" cy="619.2" r="5.9" fill="#fff" stroke="#8a8a8a" stroke-width="1.1"/><circle cx="306" cy="619.2" r="3.1" fill="#a2a2a2"/><rect x="319" y="614.5" width="14.1" height="9" fill="#2a7cc3"/><path d="M319.8 615.5 L326.05 620 L332.3 615.5" fill="none" stroke="#fff" stroke-width="1.2"/><circle cx="306" cy="639.2" r="5.9" fill="#fff" stroke="#8a8a8a" stroke-width="1.1"/><circle cx="306" cy="639.2" r="3.1" fill="#a2a2a2"/><rect x="319" y="634.5" width="14.1" height="9" fill="#2a7cc3"/><path d="M319.8 635.5 L326.05 640 L332.3 635.5" fill="none" stroke="#fff" stroke-width="1.2"/><circle cx="306" cy="659.2" r="5.9" fill="#fff" stroke="#8a8a8a" stroke-width="1.1"/><circle cx="306" cy="659.2" r="3.1" fill="#a2a2a2"/><rect x="318" y="653.5" width="16.1" height="11" rx="1" fill="#fff"/><rect x="319" y="654.5" width="14.1" height="9" fill="#2a7cc3"/><path d="M319.8 655.5 L326.05 660 L332.3 655.5" fill="none" stroke="#fff" stroke-width="1.2"/><circle cx="306" cy="679.2" r="5.9" fill="#fff" stroke="#8a8a8a" stroke-width="1.1"/><circle cx="306" cy="679.2" r="3.1" fill="#a2a2a2"/><rect x="319" y="674.5" width="14.1" height="9" fill="#2a7cc3"/><path d="M319.8 675.5 L326.05 680 L332.3 675.5" fill="none" stroke="#fff" stroke-width="1.2"/><circle cx="306" cy="699.2" r="5.9" fill="#fff" stroke="#8a8a8a" stroke-width="1.1"/><circle cx="306" cy="699.2" r="3.1" fill="#a2a2a2"/><rect x="319" y="694.5" width="14.1" height="9" fill="#2a7cc3"/><path d="M319.8 695.5 L326.05 700 L332.3 695.5" fill="none" stroke="#fff" stroke-width="1.2"/><circle cx="306" cy="719.2" r="5.9" fill="#fff" stroke="#8a8a8a" stroke-width="1.1"/><circle cx="306" cy="719.2" r="3.1" fill="#a2a2a2"/><rect x="319" y="714.5" width="14.1" height="9" fill="#2a7cc3"/><path d="M319.8 715.5 L326.05 720 L332.3 715.5" fill="none" stroke="#fff" stroke-width="1.2"/></svg>
<div style="left:207px;top:184px;width:15px;height:543px;background:#774bc1;"></div>
<div style="left:1530px;top:184px;width:13px;height:543px;background:#f3f3f3;"></div>
<div style="left:1531.5px;top:202px;width:14px;height:93px;background:#fff;border:1px solid #d0d0d0;box-sizing:border-box;border-radius:2px;"></div>
<svg style="left:1530px;top:188px;" width="13" height="10" viewBox="0 0 13 10"><path d="M4.8 6.7 L8.3 2.8 L11.8 6.7Z" fill="#333"/></svg>
<div style="left:1534.5px;top:245.5px;width:8.5px;height:1px;background:#8a8a8a;"></div>
<div style="left:1534.5px;top:247.5px;width:8.5px;height:1px;background:#8a8a8a;"></div>
<div style="left:1534.5px;top:249.5px;width:8.5px;height:1px;background:#8a8a8a;"></div>
<div style="left:570px;top:146px;width:40px;height:40px;background:#f71bb1;border-radius:50%;box-shadow:0 3px 4px rgba(0,0,0,0.42);"></div>
<div class="t" style="top:149px;height:36px;line-height:36px;font-size:30px;color:#fff;left:571.2px;width:40px;text-align:center;-webkit-text-stroke:0.7px #fff;">1</div>
<div style="left:582.5px;top:174px;width:7.2px;height:4.4px;background:#f71bb1;"></div>
<div style="left:593.4px;top:174px;width:6px;height:4.4px;background:#f71bb1;"></div>
<div style="left:627px;top:146px;width:40px;height:40px;background:#f71bb1;border-radius:50%;box-shadow:0 3px 4px rgba(0,0,0,0.42);"></div>
<div class="t" style="top:149px;height:36px;line-height:36px;font-size:30px;color:#fff;left:627.3px;width:40px;text-align:center;-webkit-text-stroke:0.7px #fff;">2</div>
<div style="left:687px;top:146px;width:40px;height:40px;background:#f71bb1;border-radius:50%;box-shadow:0 3px 4px rgba(0,0,0,0.42);"></div>
<div class="t" style="top:149px;height:36px;line-height:36px;font-size:30px;color:#fff;left:687.3px;width:40px;text-align:center;-webkit-text-stroke:0.7px #fff;">3</div>
<div style="left:738px;top:146px;width:40px;height:40px;background:#f71bb1;border-radius:50%;box-shadow:0 3px 4px rgba(0,0,0,0.42);"></div>
<div class="t" style="top:149px;height:36px;line-height:36px;font-size:30px;color:#fff;left:738.3px;width:40px;text-align:center;-webkit-text-stroke:0.7px #fff;">4</div>
<div style="left:785px;top:146px;width:40px;height:40px;background:#f71bb1;border-radius:50%;box-shadow:0 3px 4px rgba(0,0,0,0.42);"></div>
<div class="t" style="top:149px;height:36px;line-height:36px;font-size:30px;color:#fff;left:785.3px;width:40px;text-align:center;-webkit-text-stroke:0.7px #fff;">5</div>
<div style="left:867px;top:146px;width:40px;height:40px;background:#f71bb1;border-radius:50%;box-shadow:0 3px 4px rgba(0,0,0,0.42);"></div>
<div class="t" style="top:149px;height:36px;line-height:36px;font-size:30px;color:#fff;left:867.3px;width:40px;text-align:center;-webkit-text-stroke:0.7px #fff;">6</div>
<div style="left:1452px;top:146px;width:40px;height:40px;background:#f71bb1;border-radius:50%;box-shadow:0 3px 4px rgba(0,0,0,0.42);"></div>
<div class="t" style="top:149px;height:36px;line-height:36px;font-size:30px;color:#fff;left:1452.3px;width:40px;text-align:center;-webkit-text-stroke:0.7px #fff;">7</div>
</body></html>
